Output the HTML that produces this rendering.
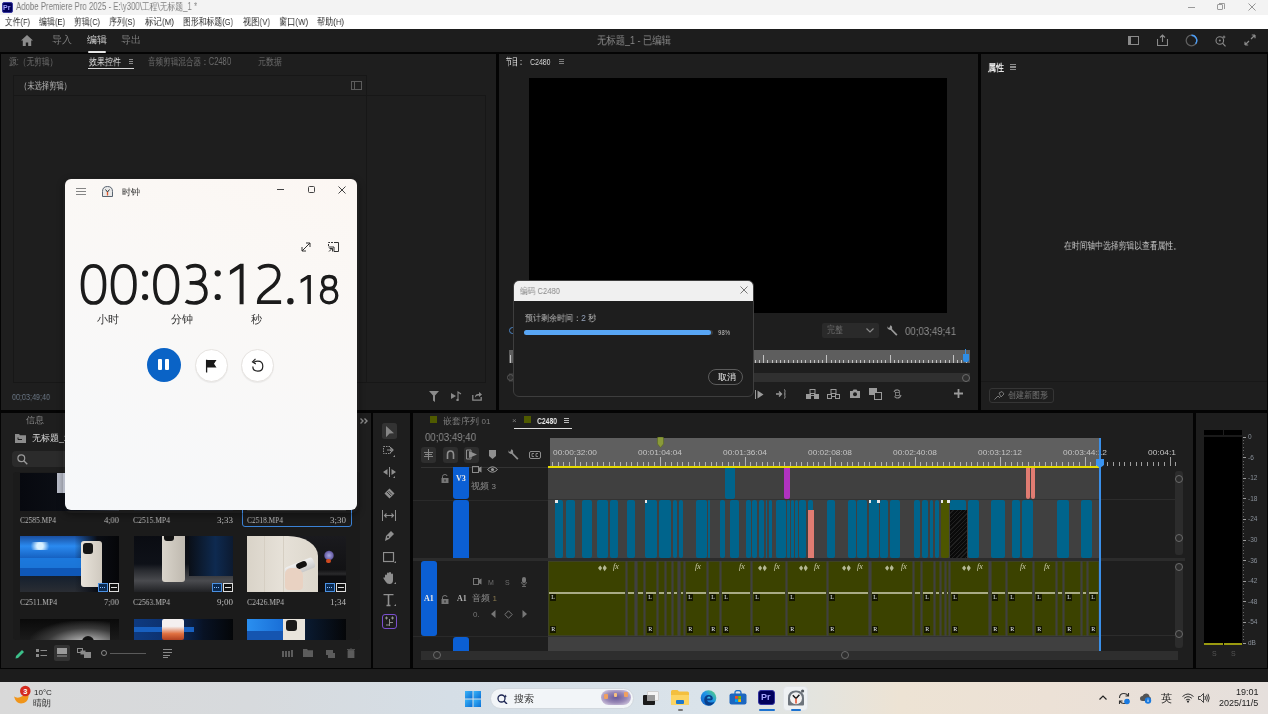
<!DOCTYPE html>
<html><head><meta charset="utf-8">
<style>
*{box-sizing:border-box;margin:0;padding:0}
html,body{width:1268px;height:714px;overflow:hidden;background:#040404;font-family:"Liberation Sans",sans-serif;position:relative}
.a{position:absolute}
.t{position:absolute;white-space:nowrap;line-height:1;will-change:transform}
.fit{transform-origin:0 0}
.pnl{position:absolute;background:#1e1e1e}
</style></head><body>
<!-- title bar -->
<div class="a" style="left:0;top:0;width:1268px;height:15px;background:#f3f3f3"></div>
<div class="a" style="left:1.5px;top:2px;width:11px;height:10.5px;background:#00005b;border-radius:2px;border:1px solid #3a3aa0"></div>
<div class="t" style="left:3px;top:3.8px;font-size:7px;color:#a6a6ff;font-weight:bold">Pr</div>
<div class="t fit" style="left: 16px; top: 2px; font-size: 10px; color: rgb(127, 127, 127); width: 231.781px; transform: scaleX(0.7809);">Adobe Premiere Pro 2025 - E:\y300\工程\无标题_1 *</div>
<div class="a" style="left:1188px;top:7px;width:7px;height:1px;background:#9a9a9a"></div>
<div class="a" style="left:1217px;top:4px;width:6px;height:6px;border:1px solid #9a9a9a;border-radius:1px"></div>
<div class="a" style="left:1219px;top:2.5px;width:6px;height:6px;border-top:1px solid #9a9a9a;border-right:1px solid #9a9a9a;border-radius:0 1.5px 0 0"></div>
<svg class="a" style="left:1247.5px;top:3px" width="8" height="8"><path d="M0.5 0.5L7.5 7.5M7.5 0.5L0.5 7.5" stroke="#8a8a8a" stroke-width="0.9"></path></svg>
<!-- menu -->
<div class="a" style="left:0;top:15px;width:1268px;height:13.5px;background:#fff"></div>
<div class="t fit" style="left: 5px; top: 17px; font-size: 9.5px; color: rgb(42, 42, 42); width: 32.1406px; transform: scaleX(0.7778);">文件(F)</div>
<div class="t fit" style="left: 39px; top: 17px; font-size: 9.5px; color: rgb(42, 42, 42); width: 32.6719px; transform: scaleX(0.7958);">编辑(E)</div>
<div class="t fit" style="left: 74px; top: 17px; font-size: 9.5px; color: rgb(42, 42, 42); width: 33.2031px; transform: scaleX(0.7831);">剪辑(C)</div>
<div class="t fit" style="left: 109px; top: 17px; font-size: 9.5px; color: rgb(42, 42, 42); width: 32.6719px; transform: scaleX(0.7958);">序列(S)</div>
<div class="t fit" style="left: 145px; top: 17px; font-size: 9.5px; color: rgb(42, 42, 42); width: 34.25px; transform: scaleX(0.8467);">标记(M)</div>
<div class="t fit" style="left: 183px; top: 17px; font-size: 9.5px; color: rgb(42, 42, 42); width: 63.7188px; transform: scaleX(0.7847);">图形和标题(G)</div>
<div class="t fit" style="left: 243px; top: 17px; font-size: 9.5px; color: rgb(42, 42, 42); width: 32.6719px; transform: scaleX(0.8264);">视图(V)</div>
<div class="t fit" style="left: 279px; top: 17px; font-size: 9.5px; color: rgb(42, 42, 42); width: 35.2969px; transform: scaleX(0.8216);">窗口(W)</div>
<div class="t fit" style="left: 317px; top: 17px; font-size: 9.5px; color: rgb(42, 42, 42); width: 33.2031px; transform: scaleX(0.8132);">帮助(H)</div>
<!-- header -->
<div class="a" style="left:0;top:28.5px;width:1268px;height:23.5px;background:#1d1d1d"></div>
<svg class="a" style="left:21px;top:35px" width="12" height="11"><path d="M6 0L0 5.5H1.8V11H4.8V7.5H7.2V11H10.2V5.5H12Z" fill="#8c8c8c"></path></svg>
<div class="t" style="left:52px;top:35px;font-size:10px;color:#7c7c7c">导入</div>
<div class="t" style="left:87px;top:35px;font-size:10px;color:#cfcfcf">编辑</div>
<div class="a" style="left:88px;top:51px;width:18px;height:1.5px;background:#e6e6e6;border-radius:1px"></div>
<div class="t" style="left:121px;top:35px;font-size:10px;color:#7c7c7c">导出</div>
<div class="t fit" style="left: 597px; top: 35px; font-size: 10.5px; color: rgb(138, 138, 138); width: 87.0156px; transform: scaleX(0.8504);">无标题_1 - 已编辑</div>
<svg class="a" style="left:1128px;top:36px" width="11" height="9"><rect x="0.5" y="0.5" width="10" height="8" fill="none" stroke="#8a8a8a"></rect><rect x="1" y="1" width="2" height="7" fill="#8a8a8a"></rect></svg>
<svg class="a" style="left:1157px;top:34px" width="11" height="12"><path d="M0.5 5V11.5H10.5V5M5.5 8V1M3 3.5L5.5 1L8 3.5" fill="none" stroke="#8a8a8a" stroke-width="1.1"></path></svg>
<svg class="a" style="left:1185px;top:34px" width="13" height="13"><circle cx="6.5" cy="6.5" r="5.3" fill="none" stroke="#5e5e5e" stroke-width="1.3"></circle><path d="M6.5 1.2A5.3 5.3 0 0 1 10.6 9.8" fill="none" stroke="#4a9cf5" stroke-width="1.4"></path></svg>
<svg class="a" style="left:1215px;top:34px" width="12" height="13"><circle cx="4.8" cy="6.5" r="3.8" fill="none" stroke="#8a8a8a" stroke-width="1.1"></circle><path d="M7.5 9.2L10.5 12.3" stroke="#8a8a8a" stroke-width="1.2"></path><circle cx="4.8" cy="6.5" r="1" fill="#8a8a8a"></circle><path d="M9 1L9.6 2.5L11 3L9.6 3.5L9 5L8.4 3.5L7 3L8.4 2.5Z" fill="#8a8a8a"></path></svg>
<svg class="a" style="left:1244px;top:34px" width="12" height="12"><path d="M7 5L11 1M11 1H7.8M11 1V4.2M5 7L1 11M1 11H4.2M1 11V7.8" fill="none" stroke="#8a8a8a" stroke-width="1.2"></path></svg>
<!-- ===== effect controls panel ===== -->
<div class="pnl" style="left:1px;top:54px;width:495px;height:356px"></div>
<div class="t fit" style="left: 9px; top: 57px; font-size: 10px; color: rgb(114, 114, 114); width: 62.7812px; transform: scaleX(0.7646);">源:（无剪辑）</div>
<div class="t fit" style="left: 89px; top: 57px; font-size: 10px; color: rgb(226, 226, 226); width: 40px; transform: scaleX(0.8);">效果控件</div>
<div class="a" style="left:129px;top:59px;width:4px;height:5px;background:repeating-linear-gradient(#8a8a8a 0 1px,transparent 1px 2px)"></div>
<div class="a" style="left:88px;top:68px;width:46px;height:1px;background:#d8d8d8"></div>
<div class="t fit" style="left: 148px; top: 57px; font-size: 10px; color: rgb(110, 110, 110); width: 109.469px; transform: scaleX(0.7582);">音频剪辑混合器：C2480</div>
<div class="t fit" style="left: 258px; top: 57px; font-size: 10px; color: rgb(110, 110, 110); width: 30px; transform: scaleX(0.8);">元数据</div>
<div class="a" style="left:13px;top:75px;width:354px;height:308px;border:1px solid #171717"></div>
<div class="a" style="left:13px;top:95px;width:354px;height:1px;background:#171717"></div>
<div class="a" style="left:366px;top:95px;width:120px;height:288px;border:1px solid #171717;border-left:none"></div>
<div class="t fit" style="left: 20px; top: 81px; font-size: 9.5px; color: rgb(184, 184, 184); width: 70px; transform: scaleX(0.7286);">（未选择剪辑）</div>
<svg class="a" style="left:351px;top:81px" width="11" height="9"><rect x="0.5" y="0.5" width="10" height="8" fill="none" stroke="#5c5c5c"></rect><path d="M3.5 0.5V8.5" stroke="#5c5c5c"></path></svg>
<div class="t fit" style="left: 12px; top: 393px; font-size: 8.5px; color: rgb(107, 119, 133); width: 44.9062px; transform: scaleX(0.8462);">00;03;49;40</div>
<svg class="a" style="left:429px;top:391px" width="10" height="11"><path d="M0 0H10L6 4.5V11L4 9.5V4.5Z" fill="#8a8a8a"></path></svg>
<svg class="a" style="left:451px;top:391px" width="11" height="10"><path d="M0 2L5 5L0 8Z" fill="#8a8a8a"></path><path d="M7 9.5V1L10 3" fill="none" stroke="#8a8a8a" stroke-width="1.1"></path><circle cx="6.5" cy="9" r="1.2" fill="#8a8a8a"></circle></svg>
<svg class="a" style="left:472px;top:391px" width="10" height="10"><path d="M0.8 4V9.2H9.2V6" fill="none" stroke="#8a8a8a" stroke-width="1.3"></path><path d="M3 6.5Q3 3 6 3H7V1L10 3.5L7 6V4.5H6Q4.5 4.5 3 6.5Z" fill="#8a8a8a"></path></svg>

<!-- ===== program monitor ===== -->
<div class="pnl" style="left:499px;top:54px;width:479px;height:356px"></div>
<div class="t fit" style="left: 506px; top: 57px; font-size: 10px; color: rgb(230, 230, 230); width: 30px; transform: scaleX(0.6);">节目：</div>
<div class="t fit" style="left: 530px; top: 58px; font-size: 9px; color: rgb(220, 220, 220); width: 26.5312px; transform: scaleX(0.7727);">C2480</div>
<div class="a" style="left:559px;top:59px;width:5px;height:5px;background:repeating-linear-gradient(#7d7d7d 0 1px,transparent 1px 2px)"></div>
<div class="a" style="left:529px;top:78px;width:418px;height:235px;background:#000"></div>
<div class="a" style="left:509px;top:327px;width:7px;height:7px;border-radius:50%;border:1.2px solid #4d86c6"></div>
<!-- dropdown -->
<div class="a" style="left:822px;top:323px;width:57px;height:15px;background:#2a2a2a;border-radius:2px"></div>
<div class="t fit" style="left: 827px; top: 325px; font-size: 10px; color: rgb(110, 110, 110); width: 20px; transform: scaleX(0.8);">完整</div>
<svg class="a" style="left:866px;top:328px" width="8" height="5"><path d="M0.5 0.5L4 4L7.5 0.5" fill="none" stroke="#8a8a8a" stroke-width="1.2"></path></svg>
<svg class="a" style="left:887px;top:325px" width="11" height="11"><path d="M10.5 9.5L5 4Q5.8 1 3.3 0.3L2.6 2.4L1 2.8L0.3 1.3Q-0.2 4.8 3.7 5L9.2 10.8Z" fill="#9a9a9a"></path></svg>
<div class="t fit" style="left: 905px; top: 326px; font-size: 10.5px; color: rgb(143, 143, 143); width: 55.4688px; transform: scaleX(0.9194);">00;03;49;41</div>
<!-- scrubber -->
<div class="a" style="left:509px;top:350px;width:461px;height:13px;background:#5e5e5e"></div>
<div class="a" style="left:509.90px;top:355px;width:1px;height:8px;background:#c2c2c2"></div>
<div class="a" style="left:514.12px;top:360px;width:1px;height:3px;background:#c2c2c2"></div>
<div class="a" style="left:518.34px;top:360px;width:1px;height:3px;background:#c2c2c2"></div>
<div class="a" style="left:522.56px;top:360px;width:1px;height:3px;background:#c2c2c2"></div>
<div class="a" style="left:526.78px;top:360px;width:1px;height:3px;background:#c2c2c2"></div>
<div class="a" style="left:531.00px;top:360px;width:1px;height:3px;background:#c2c2c2"></div>
<div class="a" style="left:535.22px;top:360px;width:1px;height:3px;background:#c2c2c2"></div>
<div class="a" style="left:539.44px;top:360px;width:1px;height:3px;background:#c2c2c2"></div>
<div class="a" style="left:543.66px;top:360px;width:1px;height:3px;background:#c2c2c2"></div>
<div class="a" style="left:547.88px;top:360px;width:1px;height:3px;background:#c2c2c2"></div>
<div class="a" style="left:552.10px;top:360px;width:1px;height:3px;background:#c2c2c2"></div>
<div class="a" style="left:556.32px;top:360px;width:1px;height:3px;background:#c2c2c2"></div>
<div class="a" style="left:560.54px;top:360px;width:1px;height:3px;background:#c2c2c2"></div>
<div class="a" style="left:564.76px;top:360px;width:1px;height:3px;background:#c2c2c2"></div>
<div class="a" style="left:568.98px;top:360px;width:1px;height:3px;background:#c2c2c2"></div>
<div class="a" style="left:573.20px;top:355px;width:1px;height:8px;background:#c2c2c2"></div>
<div class="a" style="left:577.42px;top:360px;width:1px;height:3px;background:#c2c2c2"></div>
<div class="a" style="left:581.64px;top:360px;width:1px;height:3px;background:#c2c2c2"></div>
<div class="a" style="left:585.86px;top:360px;width:1px;height:3px;background:#c2c2c2"></div>
<div class="a" style="left:590.08px;top:360px;width:1px;height:3px;background:#c2c2c2"></div>
<div class="a" style="left:594.30px;top:360px;width:1px;height:3px;background:#c2c2c2"></div>
<div class="a" style="left:598.52px;top:360px;width:1px;height:3px;background:#c2c2c2"></div>
<div class="a" style="left:602.74px;top:360px;width:1px;height:3px;background:#c2c2c2"></div>
<div class="a" style="left:606.96px;top:360px;width:1px;height:3px;background:#c2c2c2"></div>
<div class="a" style="left:611.18px;top:360px;width:1px;height:3px;background:#c2c2c2"></div>
<div class="a" style="left:615.40px;top:360px;width:1px;height:3px;background:#c2c2c2"></div>
<div class="a" style="left:619.62px;top:360px;width:1px;height:3px;background:#c2c2c2"></div>
<div class="a" style="left:623.84px;top:360px;width:1px;height:3px;background:#c2c2c2"></div>
<div class="a" style="left:628.06px;top:360px;width:1px;height:3px;background:#c2c2c2"></div>
<div class="a" style="left:632.28px;top:360px;width:1px;height:3px;background:#c2c2c2"></div>
<div class="a" style="left:636.50px;top:355px;width:1px;height:8px;background:#c2c2c2"></div>
<div class="a" style="left:640.72px;top:360px;width:1px;height:3px;background:#c2c2c2"></div>
<div class="a" style="left:644.94px;top:360px;width:1px;height:3px;background:#c2c2c2"></div>
<div class="a" style="left:649.16px;top:360px;width:1px;height:3px;background:#c2c2c2"></div>
<div class="a" style="left:653.38px;top:360px;width:1px;height:3px;background:#c2c2c2"></div>
<div class="a" style="left:657.60px;top:360px;width:1px;height:3px;background:#c2c2c2"></div>
<div class="a" style="left:661.82px;top:360px;width:1px;height:3px;background:#c2c2c2"></div>
<div class="a" style="left:666.04px;top:360px;width:1px;height:3px;background:#c2c2c2"></div>
<div class="a" style="left:670.26px;top:360px;width:1px;height:3px;background:#c2c2c2"></div>
<div class="a" style="left:674.48px;top:360px;width:1px;height:3px;background:#c2c2c2"></div>
<div class="a" style="left:678.70px;top:360px;width:1px;height:3px;background:#c2c2c2"></div>
<div class="a" style="left:682.92px;top:360px;width:1px;height:3px;background:#c2c2c2"></div>
<div class="a" style="left:687.14px;top:360px;width:1px;height:3px;background:#c2c2c2"></div>
<div class="a" style="left:691.36px;top:360px;width:1px;height:3px;background:#c2c2c2"></div>
<div class="a" style="left:695.58px;top:360px;width:1px;height:3px;background:#c2c2c2"></div>
<div class="a" style="left:699.80px;top:355px;width:1px;height:8px;background:#c2c2c2"></div>
<div class="a" style="left:704.02px;top:360px;width:1px;height:3px;background:#c2c2c2"></div>
<div class="a" style="left:708.24px;top:360px;width:1px;height:3px;background:#c2c2c2"></div>
<div class="a" style="left:712.46px;top:360px;width:1px;height:3px;background:#c2c2c2"></div>
<div class="a" style="left:716.68px;top:360px;width:1px;height:3px;background:#c2c2c2"></div>
<div class="a" style="left:720.90px;top:360px;width:1px;height:3px;background:#c2c2c2"></div>
<div class="a" style="left:725.12px;top:360px;width:1px;height:3px;background:#c2c2c2"></div>
<div class="a" style="left:729.34px;top:360px;width:1px;height:3px;background:#c2c2c2"></div>
<div class="a" style="left:733.56px;top:360px;width:1px;height:3px;background:#c2c2c2"></div>
<div class="a" style="left:737.78px;top:360px;width:1px;height:3px;background:#c2c2c2"></div>
<div class="a" style="left:742.00px;top:360px;width:1px;height:3px;background:#c2c2c2"></div>
<div class="a" style="left:746.22px;top:360px;width:1px;height:3px;background:#c2c2c2"></div>
<div class="a" style="left:750.44px;top:360px;width:1px;height:3px;background:#c2c2c2"></div>
<div class="a" style="left:754.66px;top:360px;width:1px;height:3px;background:#c2c2c2"></div>
<div class="a" style="left:758.88px;top:360px;width:1px;height:3px;background:#c2c2c2"></div>
<div class="a" style="left:763.10px;top:355px;width:1px;height:8px;background:#c2c2c2"></div>
<div class="a" style="left:767.32px;top:360px;width:1px;height:3px;background:#c2c2c2"></div>
<div class="a" style="left:771.54px;top:360px;width:1px;height:3px;background:#c2c2c2"></div>
<div class="a" style="left:775.76px;top:360px;width:1px;height:3px;background:#c2c2c2"></div>
<div class="a" style="left:779.98px;top:360px;width:1px;height:3px;background:#c2c2c2"></div>
<div class="a" style="left:784.20px;top:360px;width:1px;height:3px;background:#c2c2c2"></div>
<div class="a" style="left:788.42px;top:360px;width:1px;height:3px;background:#c2c2c2"></div>
<div class="a" style="left:792.64px;top:360px;width:1px;height:3px;background:#c2c2c2"></div>
<div class="a" style="left:796.86px;top:360px;width:1px;height:3px;background:#c2c2c2"></div>
<div class="a" style="left:801.08px;top:360px;width:1px;height:3px;background:#c2c2c2"></div>
<div class="a" style="left:805.30px;top:360px;width:1px;height:3px;background:#c2c2c2"></div>
<div class="a" style="left:809.52px;top:360px;width:1px;height:3px;background:#c2c2c2"></div>
<div class="a" style="left:813.74px;top:360px;width:1px;height:3px;background:#c2c2c2"></div>
<div class="a" style="left:817.96px;top:360px;width:1px;height:3px;background:#c2c2c2"></div>
<div class="a" style="left:822.18px;top:360px;width:1px;height:3px;background:#c2c2c2"></div>
<div class="a" style="left:826.40px;top:355px;width:1px;height:8px;background:#c2c2c2"></div>
<div class="a" style="left:830.62px;top:360px;width:1px;height:3px;background:#c2c2c2"></div>
<div class="a" style="left:834.84px;top:360px;width:1px;height:3px;background:#c2c2c2"></div>
<div class="a" style="left:839.06px;top:360px;width:1px;height:3px;background:#c2c2c2"></div>
<div class="a" style="left:843.28px;top:360px;width:1px;height:3px;background:#c2c2c2"></div>
<div class="a" style="left:847.50px;top:360px;width:1px;height:3px;background:#c2c2c2"></div>
<div class="a" style="left:851.72px;top:360px;width:1px;height:3px;background:#c2c2c2"></div>
<div class="a" style="left:855.94px;top:360px;width:1px;height:3px;background:#c2c2c2"></div>
<div class="a" style="left:860.16px;top:360px;width:1px;height:3px;background:#c2c2c2"></div>
<div class="a" style="left:864.38px;top:360px;width:1px;height:3px;background:#c2c2c2"></div>
<div class="a" style="left:868.60px;top:360px;width:1px;height:3px;background:#c2c2c2"></div>
<div class="a" style="left:872.82px;top:360px;width:1px;height:3px;background:#c2c2c2"></div>
<div class="a" style="left:877.04px;top:360px;width:1px;height:3px;background:#c2c2c2"></div>
<div class="a" style="left:881.26px;top:360px;width:1px;height:3px;background:#c2c2c2"></div>
<div class="a" style="left:885.48px;top:360px;width:1px;height:3px;background:#c2c2c2"></div>
<div class="a" style="left:889.70px;top:355px;width:1px;height:8px;background:#c2c2c2"></div>
<div class="a" style="left:893.92px;top:360px;width:1px;height:3px;background:#c2c2c2"></div>
<div class="a" style="left:898.14px;top:360px;width:1px;height:3px;background:#c2c2c2"></div>
<div class="a" style="left:902.36px;top:360px;width:1px;height:3px;background:#c2c2c2"></div>
<div class="a" style="left:906.58px;top:360px;width:1px;height:3px;background:#c2c2c2"></div>
<div class="a" style="left:910.80px;top:360px;width:1px;height:3px;background:#c2c2c2"></div>
<div class="a" style="left:915.02px;top:360px;width:1px;height:3px;background:#c2c2c2"></div>
<div class="a" style="left:919.24px;top:360px;width:1px;height:3px;background:#c2c2c2"></div>
<div class="a" style="left:923.46px;top:360px;width:1px;height:3px;background:#c2c2c2"></div>
<div class="a" style="left:927.68px;top:360px;width:1px;height:3px;background:#c2c2c2"></div>
<div class="a" style="left:931.90px;top:360px;width:1px;height:3px;background:#c2c2c2"></div>
<div class="a" style="left:936.12px;top:360px;width:1px;height:3px;background:#c2c2c2"></div>
<div class="a" style="left:940.34px;top:360px;width:1px;height:3px;background:#c2c2c2"></div>
<div class="a" style="left:944.56px;top:360px;width:1px;height:3px;background:#c2c2c2"></div>
<div class="a" style="left:948.78px;top:360px;width:1px;height:3px;background:#c2c2c2"></div>
<div class="a" style="left:953.00px;top:355px;width:1px;height:8px;background:#c2c2c2"></div>
<div class="a" style="left:957.22px;top:360px;width:1px;height:3px;background:#c2c2c2"></div>
<div class="a" style="left:961.44px;top:360px;width:1px;height:3px;background:#c2c2c2"></div>
<div class="a" style="left:965.66px;top:360px;width:1px;height:3px;background:#c2c2c2"></div>
<div class="a" style="left:963px;top:354px;width:6px;height:8px;background:#2f8de4;border-radius:0 0 2px 2px"></div>
<div class="a" style="left:965px;top:349px;width:1px;height:6px;background:#2f8de4"></div>
<div class="a" style="left:509px;top:373px;width:461px;height:9px;background:#303030"></div>
<div class="a" style="left:507px;top:374px;width:7px;height:7px;border-radius:50%;border:1.2px solid #5a5a5a"></div>
<div class="a" style="left:962px;top:374px;width:8px;height:8px;border-radius:50%;border:1.2px solid #6b6b6b"></div>
<!-- transport buttons -->
<svg class="a" style="left:755px;top:390px" width="9" height="9"><path d="M0.5 0V9" stroke="#9a9a9a"></path><path d="M2.5 0.5L8.5 4.5L2.5 8.5Z" fill="#9a9a9a"></path></svg>
<svg class="a" style="left:776px;top:389px" width="10" height="10"><path d="M0 5H5M3 2.5L5.5 5L3 7.5" fill="none" stroke="#9a9a9a" stroke-width="1.3"></path><path d="M8 0.5Q9.5 0.5 9 3L8.5 4.5L9.5 5L8.5 5.5L9 7Q9.5 9.5 8 9.5" fill="none" stroke="#9a9a9a" stroke-width="0.9"></path></svg>
<svg class="a" style="left:806px;top:389px" width="13" height="10"><rect x="4" y="0.5" width="5" height="4" fill="none" stroke="#9a9a9a"></rect><rect x="0" y="5" width="5" height="5" fill="#9a9a9a"></rect><rect x="8" y="5" width="5" height="5" fill="#9a9a9a"></rect><path d="M5 6.5H8" stroke="#9a9a9a"></path></svg>
<svg class="a" style="left:827px;top:389px" width="13" height="10"><rect x="4" y="0.5" width="5" height="4" fill="none" stroke="#9a9a9a"></rect><rect x="0.5" y="5.5" width="4" height="4" fill="none" stroke="#9a9a9a"></rect><rect x="8.5" y="5.5" width="4" height="4" fill="none" stroke="#9a9a9a"></rect><path d="M4.5 7.5H8.5" stroke="#9a9a9a"></path></svg>
<svg class="a" style="left:850px;top:389px" width="10" height="9"><path d="M0 2H2.5L3.5 0.5H6.5L7.5 2H10V9H0Z" fill="#9a9a9a"></path><circle cx="5" cy="5.3" r="2" fill="#1e1e1e"></circle></svg>
<svg class="a" style="left:869px;top:388px" width="13" height="12"><rect x="0" y="0" width="8" height="7" fill="#9a9a9a"></rect><rect x="5.5" y="4.5" width="7" height="7" fill="#1e1e1e" stroke="#9a9a9a"></rect></svg>
<svg class="a" style="left:893px;top:389px" width="9" height="10"><path d="M1 3Q2 0.5 5 1L7 2.5M8 6Q7 9.5 3.5 9L1.5 7.5" fill="none" stroke="#8a8a8a" stroke-width="1.1"></path><rect x="2.5" y="3.5" width="4" height="3" fill="none" stroke="#8a8a8a" stroke-width="0.8"></rect></svg>
<svg class="a" style="left:954px;top:389px" width="9" height="9"><path d="M4.5 0V9M0 4.5H9" stroke="#9a9a9a" stroke-width="1.8"></path></svg>

<!-- ===== properties ===== -->
<div class="pnl" style="left:981px;top:54px;width:286px;height:356px"></div>
<div class="t fit" style="left: 988px; top: 63px; font-size: 10px; color: rgb(232, 232, 232); font-weight: bold; width: 20px; transform: scaleX(0.8);">属性</div>
<div class="a" style="left:1010px;top:64px;width:6px;height:6px;background:repeating-linear-gradient(#8a8a8a 0 1px,transparent 1px 2.5px)"></div>
<div class="t fit" style="left: 1064px; top: 241px; font-size: 9.5px; color: rgb(198, 198, 198); width: 150px; transform: scaleX(0.78);">在时间轴中选择剪辑以查看属性。</div>
<div class="a" style="left:981px;top:381px;width:286px;height:1px;background:#181818"></div>
<div class="a" style="left:989px;top:388px;width:65px;height:15px;border:1px solid #353535;border-radius:3px"></div>
<svg class="a" style="left:994px;top:391px" width="11" height="9"><path d="M0.5 8.5L4 5L6 7M5 2L8 0.5L10 3L7 6Z" fill="none" stroke="#777" stroke-width="1"></path></svg>
<div class="t fit" style="left: 1008px; top: 391px; font-size: 9px; color: rgb(122, 122, 122); width: 45px; transform: scaleX(0.8889);">创建新图形</div>
<div class="pnl" style="left:1px;top:413px;width:370px;height:254.6px"></div>
<div class="t" style="left:26px;top:416px;font-size:8.5px;color:#8a8a8a">信息</div>
<svg class="a" style="left:15px;top:434px" width="11" height="9"><path d="M0 0H4L5 1.2H11V9H0Z" fill="#8c8c8c"></path><path d="M3 5.5H7M3 3.5V5.5" stroke="#1e1e1e" stroke-width="1"></path></svg>
<div class="t" style="left:32px;top:434px;font-size:8.5px;color:#dedede">无标题_1.prproj</div>
<div class="a" style="left:12px;top:451px;width:345px;height:16px;background:#2b2b2b;border-radius:4px"></div>
<svg class="a" style="left:17px;top:454px" width="11" height="11"><circle cx="4.3" cy="4.3" r="3.4" fill="none" stroke="#9a9a9a" stroke-width="1.2"></circle><path d="M6.8 6.8L10.3 10.3" stroke="#9a9a9a" stroke-width="1.3"></path></svg>
<div class="a" style="left:13px;top:472px;width:347px;height:168px;background:#1b1b1b;border-radius:3px"></div>
<div class="a" style="left:20px;top:473px;width:99px;height:38px;background:linear-gradient(90deg,#07090f 0%,#0d1017 60%,#2b2f38 100%)"></div>
<div class="a" style="left:57px;top:473px;width:8px;height:20px;background:#b8bcc8"></div>
<div class="a" style="left:134px;top:473px;width:99px;height:38px;background:#1d2026"></div>
<div class="a" style="left:247px;top:473px;width:99px;height:38px;background:#333"></div>
<div class="a" style="left:242px;top:468px;width:110px;height:59px;border:1.5px solid #3b82d6;border-radius:3px"></div>
<div class="t fit" style="left: 20px; top: 516px; font-size: 9px; color: rgb(186, 186, 186); font-family: &quot;Liberation Serif&quot;, serif; width: 43.7656px; transform: scaleX(0.8226);">C2585.MP4</div>
<div class="t fit" style="left: 104px; top: 516px; font-size: 9px; color: rgb(186, 186, 186); font-family: &quot;Liberation Serif&quot;, serif; width: 16.0156px; transform: scaleX(0.9366);">4;00</div>
<div class="t fit" style="left: 133px; top: 516px; font-size: 9px; color: rgb(186, 186, 186); font-family: &quot;Liberation Serif&quot;, serif; width: 43.7656px; transform: scaleX(0.8454);">C2515.MP4</div>
<div class="t fit" style="left: 217px; top: 516px; font-size: 9px; color: rgb(186, 186, 186); font-family: &quot;Liberation Serif&quot;, serif; width: 16.0156px; transform: scaleX(0.999);">3;33</div>
<div class="t fit" style="left: 247px; top: 516px; font-size: 9px; color: rgb(186, 186, 186); font-family: &quot;Liberation Serif&quot;, serif; width: 43.7656px; transform: scaleX(0.8226);">C2518.MP4</div>
<div class="t fit" style="left: 330px; top: 516px; font-size: 9px; color: rgb(186, 186, 186); font-family: &quot;Liberation Serif&quot;, serif; width: 16.0156px; transform: scaleX(0.999);">3;30</div>
<div class="t fit" style="left: 20px; top: 598px; font-size: 9px; color: rgb(186, 186, 186); font-family: &quot;Liberation Serif&quot;, serif; width: 43.4375px; transform: scaleX(0.8518);">C2511.MP4</div>
<div class="t fit" style="left: 104px; top: 598px; font-size: 9px; color: rgb(186, 186, 186); font-family: &quot;Liberation Serif&quot;, serif; width: 16.0156px; transform: scaleX(0.9366);">7;00</div>
<div class="t fit" style="left: 133px; top: 598px; font-size: 9px; color: rgb(186, 186, 186); font-family: &quot;Liberation Serif&quot;, serif; width: 43.7656px; transform: scaleX(0.8454);">C2563.MP4</div>
<div class="t fit" style="left: 217px; top: 598px; font-size: 9px; color: rgb(186, 186, 186); font-family: &quot;Liberation Serif&quot;, serif; width: 16.0156px; transform: scaleX(0.999);">9;00</div>
<div class="t fit" style="left: 247px; top: 598px; font-size: 9px; color: rgb(186, 186, 186); font-family: &quot;Liberation Serif&quot;, serif; width: 43.7656px; transform: scaleX(0.8454);">C2426.MP4</div>
<div class="t fit" style="left: 330px; top: 598px; font-size: 9px; color: rgb(186, 186, 186); font-family: &quot;Liberation Serif&quot;, serif; width: 16.0156px; transform: scaleX(0.999);">1;34</div>
<div class="a" style="left:20px;top:536px;width:99px;height:56px;overflow:hidden;background:linear-gradient(180deg,#1a4fa0 0%,#2a8af0 18%,#1560c0 40%,#0d3d80 60%,#15202e 72%,#2a2d33 100%)">
<div class="a" style="left:0;top:0;width:99px;height:56px;background:linear-gradient(90deg,transparent 55%,#0a0d14 78%,#050608 100%)"></div>
<div class="a" style="left:5px;top:6px;width:30px;height:8px;background:radial-gradient(circle,#d8f0ff 0 20%,transparent 60%)"></div>
<div class="a" style="left:0;top:22px;width:75px;height:10px;background:#1d7be0;opacity:.9"></div>
<div class="a" style="left:0;top:32px;width:72px;height:8px;background:#0f58b8"></div>
<div class="a" style="left:61px;top:5px;width:21px;height:46px;background:linear-gradient(90deg,#e8e3da,#cfc9bf);border-radius:3px"></div>
<div class="a" style="left:63px;top:7px;width:10px;height:11px;background:#151515;border-radius:3px"></div>
</div>
<div class="a" style="left:134px;top:536px;width:99px;height:56px;overflow:hidden;background:linear-gradient(180deg,#0a0c12 0%,#0e1118 50%,#2a2c31 62%,#4a4b4f 80%,#202124 100%)">
<div class="a" style="left:55px;top:0;width:44px;height:40px;background:linear-gradient(90deg,#0a0f18,#0e2a50 60%,#0c1a30)"></div>
<div class="a" style="left:28px;top:0;width:23px;height:46px;background:linear-gradient(90deg,#d9d4cb,#bfb9af);border-radius:0 0 3px 3px"></div>
<div class="a" style="left:30px;top:0;width:10px;height:5px;background:#111;border-radius:0 0 3px 3px"></div>
</div>
<div class="a" style="left:247px;top:536px;width:99px;height:56px;overflow:hidden;background:linear-gradient(180deg,#1a1a1e,#121214 60%,#2a2a2c 68%,#0e0e10 72%)">
<div class="a" style="left:0;top:0;width:71px;height:56px;background:linear-gradient(90deg,#d9d3c8,#e6e1d8 50%,#ddd7cc);border-radius:0 30px 0 0/0 20px 0 0"></div>
<div class="a" style="left:17px;top:0;width:1px;height:56px;background:#d6cfc3"></div>
<div class="a" style="left:36px;top:0;width:1px;height:56px;background:#d6cfc3"></div>
<div class="a" style="left:77px;top:14px;width:10px;height:11px;background:radial-gradient(circle,#a8a8e0 0,#6a60a8 55%,transparent 70%)"></div>
<div class="a" style="left:79px;top:23px;width:5px;height:4px;background:#d04a20;border-radius:2px"></div>
<div class="a" style="left:38px;top:26px;width:30px;height:11px;background:linear-gradient(#f0f0f0,#c8c8c8);transform:rotate(-22deg);border-radius:3px"></div>
<div class="a" style="left:49px;top:26px;width:11px;height:6px;background:#111;transform:rotate(-22deg);border-radius:3px"></div>
<div class="a" style="left:38px;top:32px;width:18px;height:22px;background:#e9d2c2;border-radius:6px 8px 4px 4px"></div>
</div>
<div class="a" style="left:98px;top:583px;width:10px;height:9px;border:1px solid #4a90e2;background:#0b2a50"></div>
<div class="a" style="left:109px;top:583px;width:10px;height:9px;border:1px solid #ddd;background:#111"></div>
<div class="a" style="left:100px;top:587px;width:6px;height:1px;background:repeating-linear-gradient(90deg,#8cc0ff 0 1px,transparent 1px 2px)"></div>
<div class="a" style="left:111px;top:587px;width:6px;height:1px;background:#ddd"></div>
<div class="a" style="left:212px;top:583px;width:10px;height:9px;border:1px solid #4a90e2;background:#0b2a50"></div>
<div class="a" style="left:223px;top:583px;width:10px;height:9px;border:1px solid #ddd;background:#111"></div>
<div class="a" style="left:214px;top:587px;width:6px;height:1px;background:repeating-linear-gradient(90deg,#8cc0ff 0 1px,transparent 1px 2px)"></div>
<div class="a" style="left:225px;top:587px;width:6px;height:1px;background:#ddd"></div>
<div class="a" style="left:325px;top:583px;width:10px;height:9px;border:1px solid #4a90e2;background:#0b2a50"></div>
<div class="a" style="left:336px;top:583px;width:10px;height:9px;border:1px solid #ddd;background:#111"></div>
<div class="a" style="left:327px;top:587px;width:6px;height:1px;background:repeating-linear-gradient(90deg,#8cc0ff 0 1px,transparent 1px 2px)"></div>
<div class="a" style="left:338px;top:587px;width:6px;height:1px;background:#ddd"></div>
<div class="a" style="left:20px;top:619px;width:99px;height:21px;overflow:hidden;background:linear-gradient(180deg,#0a0a0a,#1a1a1a)"><div class="a" style="left:10px;top:2px;width:80px;height:30px;background:radial-gradient(ellipse at 70% 80%,#f0f0f0 0%,#9a9a9a 20%,#3a3a3a 50%,transparent 75%)"></div><div class="a" style="left:62px;top:17px;width:12px;height:6px;background:#111;border-radius:6px 6px 0 0"></div></div>
<div class="a" style="left:134px;top:619px;width:99px;height:21px;overflow:hidden;background:linear-gradient(90deg,#0e3a80,#0d2f6a 40%,#081224 70%,#040608)"><div class="a" style="left:0;top:8px;width:60px;height:5px;background:#1860c0"></div><div class="a" style="left:28px;top:0;width:22px;height:21px;background:linear-gradient(#f4f0f0 0 35%,#e07040 70%,#b04020);border-radius:2px"></div></div>
<div class="a" style="left:247px;top:619px;width:99px;height:21px;overflow:hidden;background:linear-gradient(90deg,#2a8ff0,#1a70d8 35%,#0a1a30 60%,#050608)"><div class="a" style="left:0;top:12px;width:40px;height:9px;background:#1555b0"></div><div class="a" style="left:36px;top:0;width:22px;height:21px;background:#e8e4dc"></div><div class="a" style="left:39px;top:1px;width:11px;height:11px;background:#1a1a1a;border-radius:3px"></div></div>
<svg class="a" style="left:15px;top:649px" width="10" height="10"><path d="M1 7L7 1L9 3L3 9L0.5 9.5Z" fill="#3cc08a"></path></svg>
<svg class="a" style="left:36px;top:649px" width="11" height="9"><rect x="0" y="0" width="3" height="3" fill="#8a8a8a"></rect><rect x="0" y="5" width="3" height="3" fill="#8a8a8a"></rect><path d="M4.5 1.5H11M4.5 6.5H11" stroke="#8a8a8a"></path></svg>
<div class="a" style="left:54px;top:645px;width:16px;height:16px;background:#333;border-radius:2px"></div>
<svg class="a" style="left:57px;top:648px" width="10" height="9"><rect x="0" y="0" width="10" height="6" fill="#9a9a9a"></rect><path d="M0 8H10" stroke="#9a9a9a"></path></svg>
<svg class="a" style="left:77px;top:648px" width="14" height="10"><rect x="0.5" y="0.5" width="5" height="4" fill="none" stroke="#8a8a8a"></rect><rect x="3.5" y="2.5" width="5" height="4" fill="#8a8a8a"></rect><rect x="7" y="4" width="7" height="6" fill="#8a8a8a"></rect></svg>
<div class="a" style="left:101px;top:650px;width:6px;height:6px;border-radius:50%;border:1px solid #8a8a8a"></div>
<div class="a" style="left:110px;top:653px;width:36px;height:1px;background:#5a5a5a"></div>
<svg class="a" style="left:163px;top:649px" width="9" height="9"><path d="M0 0.5H9M0 3.5H9M0 6.5H7M0 8.5H5" stroke="#8a8a8a"></path></svg>
<svg class="a" style="left:282px;top:650px" width="11" height="7"><rect x="0" y="1" width="2" height="6" fill="#5c5c5c"></rect><rect x="3" y="1" width="2" height="6" fill="#5c5c5c"></rect><rect x="6" y="1" width="2" height="6" fill="#5c5c5c"></rect><rect x="9" y="0" width="2" height="7" fill="#5c5c5c"></rect></svg>
<svg class="a" style="left:303px;top:649px" width="10" height="8"><path d="M0 0H4L5 1.2H10V8H0Z" fill="#5c5c5c"></path></svg>
<svg class="a" style="left:326px;top:649px" width="9" height="9"><path d="M0 1H7V4H9V9H2V6H0Z" fill="#5c5c5c"></path></svg>
<svg class="a" style="left:347px;top:648px" width="8" height="10"><path d="M0 1.5H8M3 0H5M1 2.5H7V10H1Z" fill="#5c5c5c" stroke="#5c5c5c" stroke-width="0.8"></path></svg>
<svg class="a" style="left:360px;top:417.5px" width="8" height="6"><path d="M0.5 0.5L3 3L0.5 5.5M4.5 0.5L7 3L4.5 5.5" fill="none" stroke="#8a8a8a" stroke-width="1.4"></path></svg>
<div class="pnl" style="left:373px;top:413px;width:37px;height:254.6px"></div>
<div class="a" style="left:381.5px;top:423px;width:15.5px;height:16px;background:#333;border-radius:2.5px"></div>
<svg class="a" style="left:386px;top:426px" width="9" height="12"><path d="M0 0L8 7.3L3.6 7.6L0 11.2Z" fill="#858585"></path></svg>
<svg class="a" style="left:383px;top:446px" width="13" height="11"><rect x="0.5" y="0.5" width="7" height="7" fill="none" stroke="#8f8f8f" stroke-dasharray="1.5 1"></rect><path d="M4 4H10M8 2L10 4L8 6" fill="none" stroke="#8f8f8f" stroke-width="1.2"></path><path d="M12 9V11H10Z" fill="#8f8f8f"></path></svg>
<svg class="a" style="left:383px;top:467px" width="13" height="11"><path d="M6.5 0V10" stroke="#8f8f8f"></path><path d="M0 5L4.5 2V8Z M13 5L8.5 2V8Z" fill="#8f8f8f"></path><path d="M12 9V11H10Z" fill="#8f8f8f"></path></svg>
<svg class="a" style="left:384px;top:488px" width="11" height="11"><path d="M0.5 5.5L5.5 0.5L10.5 5.5L5.5 10.5Z" fill="#8f8f8f"></path><path d="M3 4L7 8M4.5 3L8 6.5" stroke="#1e1e1e" stroke-width="0.8"></path></svg>
<svg class="a" style="left:382px;top:510px" width="14" height="11"><path d="M0.5 0V11M13.5 0V11" stroke="#8f8f8f"></path><path d="M2.5 5.5H11.5M4.5 3.5L2.5 5.5L4.5 7.5M9.5 3.5L11.5 5.5L9.5 7.5" fill="none" stroke="#8f8f8f" stroke-width="1.1"></path></svg>
<svg class="a" style="left:384px;top:530px" width="11" height="12"><path d="M1 11L2 6L7 1L10 4L5 9Z" fill="#8f8f8f"></path><circle cx="4" cy="7" r="1" fill="#1e1e1e"></circle></svg>
<svg class="a" style="left:383px;top:552px" width="13" height="11"><rect x="0.5" y="0.5" width="10" height="9" fill="none" stroke="#8f8f8f" stroke-width="1.2"></rect><path d="M13 9V11H11Z" fill="#8f8f8f"></path></svg>
<svg class="a" style="left:383px;top:572px" width="13" height="13"><path d="M2 6V3.5Q2 2.5 3 2.5Q4 2.5 4 3.5V1.5Q4 0.5 5 0.5Q6 0.5 6 1.5V1Q6 0 7 0Q8 0 8 1V2.5Q8 1.5 9 1.5Q10 1.5 10 2.5V8Q10 12 6.5 12Q4 12 2.5 9.5L0.5 6.5Q0 5.5 1 5.3Q1.8 5.2 2 6Z" fill="#8f8f8f"></path><path d="M13 10V12H11Z" fill="#8f8f8f"></path></svg>
<svg class="a" style="left:383px;top:594px" width="13" height="13"><path d="M0.5 0.5H10.5M5.5 0.5V11.5M3.5 11.5H7.5" fill="none" stroke="#8f8f8f" stroke-width="1.6"></path><path d="M13 10V12H11Z" fill="#8f8f8f"></path></svg>
<div class="a" style="left:382px;top:614px;width:15px;height:15px;border:1px solid #7b4fd0;border-radius:3px"></div>
<svg class="a" style="left:384px;top:616px" width="11" height="11"><path d="M1 2H4M2.5 0.5V3.5M7 2H10M8.5 0.5V3.5M5.5 3V10M5.5 6.5H9M2 9H5" stroke="#9a9a9a" stroke-width="0.9"></path></svg>
<div class="pnl" style="left:413px;top:413px;width:780px;height:254.6px"></div>
<div class="a" style="left:430px;top:416px;width:7px;height:7px;background:#4f5a00"></div>
<div class="t" style="left:443px;top:416.5px;font-size:8.8px;color:#7e7e7e">嵌套序列 <span style="font-size:8px">01</span></div>
<div class="t" style="left:512px;top:417px;font-size:8px;color:#7e7e7e">×</div>
<div class="a" style="left:524px;top:416px;width:7px;height:7px;background:#4f5a00"></div>
<div class="t fit" style="left: 537px; top: 417px; font-size: 9px; color: rgb(232, 232, 232); font-weight: bold; font-family: &quot;Liberation Sans&quot;, sans-serif; width: 26.5312px; transform: scaleX(0.7538);">C2480</div>
<div class="a" style="left:564px;top:418px;width:5px;height:5px;background:repeating-linear-gradient(#bcbcbc 0 1px,transparent 1px 2px)"></div>
<div class="a" style="left:514px;top:428px;width:58px;height:1px;background:#dcdcdc"></div>
<div class="t fit" style="left: 425px; top: 432px; font-size: 10.5px; color: rgb(140, 140, 140); width: 55.4688px; transform: scaleX(0.9194);">00;03;49;40</div>
<div class="a" style="left:421px;top:447px;width:15px;height:16px;background:#2e2e2e;border-radius:3px"></div>
<div class="a" style="left:443px;top:447px;width:15px;height:16px;background:#2e2e2e;border-radius:3px"></div>
<div class="a" style="left:464px;top:447px;width:15px;height:16px;background:#2e2e2e;border-radius:3px"></div>
<svg class="a" style="left:423px;top:449px" width="11" height="11"><path d="M5.5 0V11M1 3.5H10M2 5.5H9M1 7.5H10" stroke="#8f8f8f" stroke-width="0.9"></path></svg>
<svg class="a" style="left:446px;top:450px" width="9" height="9"><path d="M1.5 9V4.5Q1.5 1 4.5 1Q7.5 1 7.5 4.5V9" fill="none" stroke="#8f8f8f" stroke-width="1.6"></path></svg>
<svg class="a" style="left:466px;top:449px" width="11" height="11"><path d="M0.5 1H5V10H0.5Z" fill="none" stroke="#8f8f8f"></path><path d="M3 2L11 5.5L3 9Z" fill="#8f8f8f"></path></svg>
<svg class="a" style="left:489px;top:450px" width="7" height="9"><path d="M0 0H7V6L3.5 9L0 6Z" fill="#8f8f8f"></path></svg>
<svg class="a" style="left:508px;top:449px" width="11" height="11"><path d="M10.5 9.5L5 4Q5.8 1 3.3 0.3L2.6 2.4L1 2.8L0.3 1.3Q-0.2 4.8 3.7 5L9.2 10.8Z" fill="#8f8f8f"></path></svg>
<svg class="a" style="left:529px;top:451px" width="12" height="8"><rect x="0.5" y="0.5" width="11" height="7" rx="1.5" fill="none" stroke="#8f8f8f"></rect><path d="M5 2.5H3V5.5H5M9 2.5H7V5.5H9" fill="none" stroke="#8f8f8f" stroke-width="0.9"></path></svg>
<div class="a" style="left:421px;top:467px;width:127px;height:1px;background:#333"></div>
<div class="a" style="left:550px;top:438px;width:550px;height:29px;background:#5f5f5f"></div>
<div class="a" style="left:1100px;top:438px;width:80px;height:29px;background:#1e1e1e"></div>
<div class="a" style="left:551.83px;top:462px;width:1px;height:4px;background:#b4b4b4"></div>
<div class="a" style="left:557.50px;top:462px;width:1px;height:4px;background:#b4b4b4"></div>
<div class="a" style="left:563.17px;top:462px;width:1px;height:4px;background:#b4b4b4"></div>
<div class="a" style="left:568.83px;top:462px;width:1px;height:4px;background:#b4b4b4"></div>
<div class="a" style="left:574.50px;top:457px;width:1px;height:9px;background:#b4b4b4"></div>
<div class="a" style="left:580.17px;top:462px;width:1px;height:4px;background:#b4b4b4"></div>
<div class="a" style="left:585.83px;top:462px;width:1px;height:4px;background:#b4b4b4"></div>
<div class="a" style="left:591.50px;top:462px;width:1px;height:4px;background:#b4b4b4"></div>
<div class="a" style="left:597.17px;top:462px;width:1px;height:4px;background:#b4b4b4"></div>
<div class="a" style="left:602.83px;top:462px;width:1px;height:4px;background:#b4b4b4"></div>
<div class="a" style="left:608.50px;top:462px;width:1px;height:4px;background:#b4b4b4"></div>
<div class="a" style="left:614.17px;top:462px;width:1px;height:4px;background:#b4b4b4"></div>
<div class="a" style="left:619.83px;top:462px;width:1px;height:4px;background:#b4b4b4"></div>
<div class="a" style="left:625.50px;top:462px;width:1px;height:4px;background:#b4b4b4"></div>
<div class="a" style="left:631.17px;top:462px;width:1px;height:4px;background:#b4b4b4"></div>
<div class="a" style="left:636.83px;top:462px;width:1px;height:4px;background:#b4b4b4"></div>
<div class="a" style="left:642.50px;top:462px;width:1px;height:4px;background:#b4b4b4"></div>
<div class="a" style="left:648.17px;top:462px;width:1px;height:4px;background:#b4b4b4"></div>
<div class="a" style="left:653.83px;top:462px;width:1px;height:4px;background:#b4b4b4"></div>
<div class="a" style="left:659.50px;top:457px;width:1px;height:9px;background:#b4b4b4"></div>
<div class="a" style="left:665.17px;top:462px;width:1px;height:4px;background:#b4b4b4"></div>
<div class="a" style="left:670.83px;top:462px;width:1px;height:4px;background:#b4b4b4"></div>
<div class="a" style="left:676.50px;top:462px;width:1px;height:4px;background:#b4b4b4"></div>
<div class="a" style="left:682.17px;top:462px;width:1px;height:4px;background:#b4b4b4"></div>
<div class="a" style="left:687.83px;top:462px;width:1px;height:4px;background:#b4b4b4"></div>
<div class="a" style="left:693.50px;top:462px;width:1px;height:4px;background:#b4b4b4"></div>
<div class="a" style="left:699.17px;top:462px;width:1px;height:4px;background:#b4b4b4"></div>
<div class="a" style="left:704.83px;top:462px;width:1px;height:4px;background:#b4b4b4"></div>
<div class="a" style="left:710.50px;top:462px;width:1px;height:4px;background:#b4b4b4"></div>
<div class="a" style="left:716.17px;top:462px;width:1px;height:4px;background:#b4b4b4"></div>
<div class="a" style="left:721.83px;top:462px;width:1px;height:4px;background:#b4b4b4"></div>
<div class="a" style="left:727.50px;top:462px;width:1px;height:4px;background:#b4b4b4"></div>
<div class="a" style="left:733.17px;top:462px;width:1px;height:4px;background:#b4b4b4"></div>
<div class="a" style="left:738.83px;top:462px;width:1px;height:4px;background:#b4b4b4"></div>
<div class="a" style="left:744.50px;top:457px;width:1px;height:9px;background:#b4b4b4"></div>
<div class="a" style="left:750.17px;top:462px;width:1px;height:4px;background:#b4b4b4"></div>
<div class="a" style="left:755.83px;top:462px;width:1px;height:4px;background:#b4b4b4"></div>
<div class="a" style="left:761.50px;top:462px;width:1px;height:4px;background:#b4b4b4"></div>
<div class="a" style="left:767.17px;top:462px;width:1px;height:4px;background:#b4b4b4"></div>
<div class="a" style="left:772.83px;top:462px;width:1px;height:4px;background:#b4b4b4"></div>
<div class="a" style="left:778.50px;top:462px;width:1px;height:4px;background:#b4b4b4"></div>
<div class="a" style="left:784.17px;top:462px;width:1px;height:4px;background:#b4b4b4"></div>
<div class="a" style="left:789.83px;top:462px;width:1px;height:4px;background:#b4b4b4"></div>
<div class="a" style="left:795.50px;top:462px;width:1px;height:4px;background:#b4b4b4"></div>
<div class="a" style="left:801.17px;top:462px;width:1px;height:4px;background:#b4b4b4"></div>
<div class="a" style="left:806.83px;top:462px;width:1px;height:4px;background:#b4b4b4"></div>
<div class="a" style="left:812.50px;top:462px;width:1px;height:4px;background:#b4b4b4"></div>
<div class="a" style="left:818.17px;top:462px;width:1px;height:4px;background:#b4b4b4"></div>
<div class="a" style="left:823.83px;top:462px;width:1px;height:4px;background:#b4b4b4"></div>
<div class="a" style="left:829.50px;top:457px;width:1px;height:9px;background:#b4b4b4"></div>
<div class="a" style="left:835.17px;top:462px;width:1px;height:4px;background:#b4b4b4"></div>
<div class="a" style="left:840.83px;top:462px;width:1px;height:4px;background:#b4b4b4"></div>
<div class="a" style="left:846.50px;top:462px;width:1px;height:4px;background:#b4b4b4"></div>
<div class="a" style="left:852.17px;top:462px;width:1px;height:4px;background:#b4b4b4"></div>
<div class="a" style="left:857.83px;top:462px;width:1px;height:4px;background:#b4b4b4"></div>
<div class="a" style="left:863.50px;top:462px;width:1px;height:4px;background:#b4b4b4"></div>
<div class="a" style="left:869.17px;top:462px;width:1px;height:4px;background:#b4b4b4"></div>
<div class="a" style="left:874.83px;top:462px;width:1px;height:4px;background:#b4b4b4"></div>
<div class="a" style="left:880.50px;top:462px;width:1px;height:4px;background:#b4b4b4"></div>
<div class="a" style="left:886.17px;top:462px;width:1px;height:4px;background:#b4b4b4"></div>
<div class="a" style="left:891.83px;top:462px;width:1px;height:4px;background:#b4b4b4"></div>
<div class="a" style="left:897.50px;top:462px;width:1px;height:4px;background:#b4b4b4"></div>
<div class="a" style="left:903.17px;top:462px;width:1px;height:4px;background:#b4b4b4"></div>
<div class="a" style="left:908.83px;top:462px;width:1px;height:4px;background:#b4b4b4"></div>
<div class="a" style="left:914.50px;top:457px;width:1px;height:9px;background:#b4b4b4"></div>
<div class="a" style="left:920.17px;top:462px;width:1px;height:4px;background:#b4b4b4"></div>
<div class="a" style="left:925.83px;top:462px;width:1px;height:4px;background:#b4b4b4"></div>
<div class="a" style="left:931.50px;top:462px;width:1px;height:4px;background:#b4b4b4"></div>
<div class="a" style="left:937.17px;top:462px;width:1px;height:4px;background:#b4b4b4"></div>
<div class="a" style="left:942.83px;top:462px;width:1px;height:4px;background:#b4b4b4"></div>
<div class="a" style="left:948.50px;top:462px;width:1px;height:4px;background:#b4b4b4"></div>
<div class="a" style="left:954.17px;top:462px;width:1px;height:4px;background:#b4b4b4"></div>
<div class="a" style="left:959.83px;top:462px;width:1px;height:4px;background:#b4b4b4"></div>
<div class="a" style="left:965.50px;top:462px;width:1px;height:4px;background:#b4b4b4"></div>
<div class="a" style="left:971.17px;top:462px;width:1px;height:4px;background:#b4b4b4"></div>
<div class="a" style="left:976.83px;top:462px;width:1px;height:4px;background:#b4b4b4"></div>
<div class="a" style="left:982.50px;top:462px;width:1px;height:4px;background:#b4b4b4"></div>
<div class="a" style="left:988.17px;top:462px;width:1px;height:4px;background:#b4b4b4"></div>
<div class="a" style="left:993.83px;top:462px;width:1px;height:4px;background:#b4b4b4"></div>
<div class="a" style="left:999.50px;top:457px;width:1px;height:9px;background:#b4b4b4"></div>
<div class="a" style="left:1005.17px;top:462px;width:1px;height:4px;background:#b4b4b4"></div>
<div class="a" style="left:1010.83px;top:462px;width:1px;height:4px;background:#b4b4b4"></div>
<div class="a" style="left:1016.50px;top:462px;width:1px;height:4px;background:#b4b4b4"></div>
<div class="a" style="left:1022.17px;top:462px;width:1px;height:4px;background:#b4b4b4"></div>
<div class="a" style="left:1027.83px;top:462px;width:1px;height:4px;background:#b4b4b4"></div>
<div class="a" style="left:1033.50px;top:462px;width:1px;height:4px;background:#b4b4b4"></div>
<div class="a" style="left:1039.17px;top:462px;width:1px;height:4px;background:#b4b4b4"></div>
<div class="a" style="left:1044.83px;top:462px;width:1px;height:4px;background:#b4b4b4"></div>
<div class="a" style="left:1050.50px;top:462px;width:1px;height:4px;background:#b4b4b4"></div>
<div class="a" style="left:1056.17px;top:462px;width:1px;height:4px;background:#b4b4b4"></div>
<div class="a" style="left:1061.83px;top:462px;width:1px;height:4px;background:#b4b4b4"></div>
<div class="a" style="left:1067.50px;top:462px;width:1px;height:4px;background:#b4b4b4"></div>
<div class="a" style="left:1073.17px;top:462px;width:1px;height:4px;background:#b4b4b4"></div>
<div class="a" style="left:1078.83px;top:462px;width:1px;height:4px;background:#b4b4b4"></div>
<div class="a" style="left:1084.50px;top:457px;width:1px;height:9px;background:#b4b4b4"></div>
<div class="a" style="left:1090.17px;top:462px;width:1px;height:4px;background:#b4b4b4"></div>
<div class="a" style="left:1095.83px;top:462px;width:1px;height:4px;background:#b4b4b4"></div>
<div class="a" style="left:1101.50px;top:462px;width:1px;height:4px;background:#a0a0a0"></div>
<div class="a" style="left:1107.17px;top:462px;width:1px;height:4px;background:#a0a0a0"></div>
<div class="a" style="left:1112.83px;top:462px;width:1px;height:4px;background:#a0a0a0"></div>
<div class="a" style="left:1118.50px;top:462px;width:1px;height:4px;background:#a0a0a0"></div>
<div class="a" style="left:1124.17px;top:462px;width:1px;height:4px;background:#a0a0a0"></div>
<div class="a" style="left:1129.83px;top:462px;width:1px;height:4px;background:#a0a0a0"></div>
<div class="a" style="left:1135.50px;top:462px;width:1px;height:4px;background:#a0a0a0"></div>
<div class="a" style="left:1141.17px;top:462px;width:1px;height:4px;background:#a0a0a0"></div>
<div class="a" style="left:1146.83px;top:462px;width:1px;height:4px;background:#a0a0a0"></div>
<div class="a" style="left:1152.50px;top:462px;width:1px;height:4px;background:#a0a0a0"></div>
<div class="a" style="left:1158.17px;top:462px;width:1px;height:4px;background:#a0a0a0"></div>
<div class="a" style="left:1163.83px;top:462px;width:1px;height:4px;background:#a0a0a0"></div>
<div class="a" style="left:1169.50px;top:457px;width:1px;height:9px;background:#a0a0a0"></div>
<div class="a" style="left:1175.17px;top:462px;width:1px;height:4px;background:#a0a0a0"></div>
<div class="t fit" style="left: 552.5px; top: 449px; font-size: 8px; color: rgb(196, 196, 196); font-family: &quot;Liberation Sans&quot;, sans-serif; width: 42.2656px; transform: scaleX(1.041);">00:00:32:00</div>
<div class="t fit" style="left: 637.5px; top: 449px; font-size: 8px; color: rgb(196, 196, 196); font-family: &quot;Liberation Sans&quot;, sans-serif; width: 42.2656px; transform: scaleX(1.041);">00:01:04:04</div>
<div class="t fit" style="left: 722.5px; top: 449px; font-size: 8px; color: rgb(196, 196, 196); font-family: &quot;Liberation Sans&quot;, sans-serif; width: 42.2656px; transform: scaleX(1.041);">00:01:36:04</div>
<div class="t fit" style="left: 807.5px; top: 449px; font-size: 8px; color: rgb(196, 196, 196); font-family: &quot;Liberation Sans&quot;, sans-serif; width: 42.2656px; transform: scaleX(1.041);">00:02:08:08</div>
<div class="t fit" style="left: 892.5px; top: 449px; font-size: 8px; color: rgb(196, 196, 196); font-family: &quot;Liberation Sans&quot;, sans-serif; width: 42.2656px; transform: scaleX(1.041);">00:02:40:08</div>
<div class="t fit" style="left: 977.5px; top: 449px; font-size: 8px; color: rgb(196, 196, 196); font-family: &quot;Liberation Sans&quot;, sans-serif; width: 42.2656px; transform: scaleX(1.041);">00:03:12:12</div>
<div class="t fit" style="left: 1062.5px; top: 449px; font-size: 8px; color: rgb(196, 196, 196); font-family: &quot;Liberation Sans&quot;, sans-serif; width: 42.2656px; transform: scaleX(1.041);">00:03:44:12</div>
<div class="t fit" style="left: 1147.5px; top: 449px; font-size: 8px; color: rgb(196, 196, 196); font-family: &quot;Liberation Sans&quot;, sans-serif; width: 26.7031px; transform: scaleX(1.0486);">00:04:1</div>
<svg class="a" style="left:657px;top:437px" width="7" height="11"><path d="M0.5 1Q0.5 0 1.5 0H5.5Q6.5 0 6.5 1V7L3.5 10.5L0.5 7Z" fill="#8a9a3a" stroke="#5a6a20" stroke-width="0.6"></path></svg>
<div class="a" style="left:548px;top:466.3px;width:552px;height:1.7px;background:#e8dc00"></div>
<div class="a" style="left:548px;top:468px;width:552px;height:183px;background:#404040"></div>
<div class="a" style="left:548px;top:499px;width:552px;height:1px;background:#333"></div>
<div class="a" style="left:413px;top:500px;width:135px;height:1px;background:#2a2a2a"></div>
<div class="a" style="left:1100px;top:499px;width:75px;height:1px;background:#2c2c2c"></div>
<div class="a" style="left:413px;top:558px;width:772px;height:3px;background:#2c2c2c"></div>
<div class="a" style="left:413px;top:636px;width:135px;height:1px;background:#2a2a2a"></div>
<div class="a" style="left:548px;top:636px;width:552px;height:1px;background:#333"></div>
<div class="a" style="left:1100px;top:635px;width:75px;height:1px;background:#2c2c2c"></div>
<div class="a" style="left:1099px;top:438px;width:1.5px;height:213px;background:#3a8fe8"></div>
<svg class="a" style="left:1096px;top:459px" width="8" height="9"><path d="M0 0H8V6L4 9L0 6Z" fill="#3a93f0"></path></svg>
<div class="a" style="left:555.0px;top:500px;width:8.4px;height:58px;background:#00648c;border-radius:2px"></div>
<div class="a" style="left:565.6px;top:500px;width:9.8px;height:58px;background:#00648c;border-radius:2px"></div>
<div class="a" style="left:582.4px;top:500px;width:10.0px;height:58px;background:#00648c;border-radius:2px"></div>
<div class="a" style="left:597.0px;top:500px;width:11.4px;height:58px;background:#00648c;border-radius:2px"></div>
<div class="a" style="left:609.7px;top:500px;width:8.7px;height:58px;background:#00648c;border-radius:2px"></div>
<div class="a" style="left:626.5px;top:500px;width:8.6px;height:58px;background:#00648c;border-radius:2px"></div>
<div class="a" style="left:644.5px;top:500px;width:12.4px;height:58px;background:#00648c;border-radius:2px"></div>
<div class="a" style="left:659.0px;top:500px;width:11.8px;height:58px;background:#00648c;border-radius:2px"></div>
<div class="a" style="left:672.7px;top:500px;width:4.7px;height:58px;background:#00648c;border-radius:2px"></div>
<div class="a" style="left:679.0px;top:500px;width:4.4px;height:58px;background:#00648c;border-radius:2px"></div>
<div class="a" style="left:696.0px;top:500px;width:10.6px;height:58px;background:#00648c;border-radius:2px"></div>
<div class="a" style="left:707.7px;top:500px;width:2.4px;height:58px;background:#00648c;border-radius:2px"></div>
<div class="a" style="left:720.3px;top:500px;width:4.4px;height:58px;background:#00648c;border-radius:2px"></div>
<div class="a" style="left:730.0px;top:500px;width:9.4px;height:58px;background:#00648c;border-radius:2px"></div>
<div class="a" style="left:746.0px;top:500px;width:4.9px;height:58px;background:#00648c;border-radius:2px"></div>
<div class="a" style="left:752.0px;top:500px;width:5.4px;height:58px;background:#00648c;border-radius:2px"></div>
<div class="a" style="left:759.0px;top:500px;width:5.4px;height:58px;background:#00648c;border-radius:2px"></div>
<div class="a" style="left:765.6px;top:500px;width:1.8px;height:58px;background:#00648c;border-radius:2px"></div>
<div class="a" style="left:768.7px;top:500px;width:3.7px;height:58px;background:#00648c;border-radius:2px"></div>
<div class="a" style="left:775.7px;top:500px;width:10.5px;height:58px;background:#00648c;border-radius:2px"></div>
<div class="a" style="left:787.3px;top:500px;width:2.4px;height:58px;background:#00648c;border-radius:2px"></div>
<div class="a" style="left:790.8px;top:500px;width:3.0px;height:58px;background:#00648c;border-radius:2px"></div>
<div class="a" style="left:794.9px;top:500px;width:2.9px;height:58px;background:#00648c;border-radius:2px"></div>
<div class="a" style="left:799.0px;top:500px;width:7.4px;height:58px;background:#00648c;border-radius:2px"></div>
<div class="a" style="left:808.0px;top:500px;width:4.9px;height:58px;background:#00648c;border-radius:2px"></div>
<div class="a" style="left:827.0px;top:500px;width:8.4px;height:58px;background:#00648c;border-radius:2px"></div>
<div class="a" style="left:848.0px;top:500px;width:7.6px;height:58px;background:#00648c;border-radius:2px"></div>
<div class="a" style="left:857.0px;top:500px;width:10.2px;height:58px;background:#00648c;border-radius:2px"></div>
<div class="a" style="left:868.8px;top:500px;width:10.0px;height:58px;background:#00648c;border-radius:2px"></div>
<div class="a" style="left:880.4px;top:500px;width:8.0px;height:58px;background:#00648c;border-radius:2px"></div>
<div class="a" style="left:890.0px;top:500px;width:10.4px;height:58px;background:#00648c;border-radius:2px"></div>
<div class="a" style="left:914.0px;top:500px;width:6.4px;height:58px;background:#00648c;border-radius:2px"></div>
<div class="a" style="left:922.0px;top:500px;width:6.1px;height:58px;background:#00648c;border-radius:2px"></div>
<div class="a" style="left:929.7px;top:500px;width:3.5px;height:58px;background:#00648c;border-radius:2px"></div>
<div class="a" style="left:934.8px;top:500px;width:4.4px;height:58px;background:#00648c;border-radius:2px"></div>
<div class="a" style="left:940.8px;top:500px;width:8.0px;height:58px;background:#4d5600;border-radius:2px"></div>
<div class="a" style="left:950.4px;top:500px;width:16.0px;height:58px;background:#00648c;border-radius:2px"></div>
<div class="a" style="left:968.0px;top:500px;width:11.4px;height:58px;background:#00648c;border-radius:2px"></div>
<div class="a" style="left:990.6px;top:500px;width:14.7px;height:58px;background:#00648c;border-radius:2px"></div>
<div class="a" style="left:1011.8px;top:500px;width:8.2px;height:58px;background:#00648c;border-radius:2px"></div>
<div class="a" style="left:1021.8px;top:500px;width:11.1px;height:58px;background:#00648c;border-radius:2px"></div>
<div class="a" style="left:1057.0px;top:500px;width:12.4px;height:58px;background:#00648c;border-radius:2px"></div>
<div class="a" style="left:1081.0px;top:500px;width:10.8px;height:58px;background:#00648c;border-radius:2px"></div>
<div class="a" style="left:808px;top:510px;width:5.5px;height:48px;background:#e07c72"></div>
<div class="a" style="left:950.4px;top:510px;width:16.6px;height:48px;background:repeating-linear-gradient(135deg,#0a0a0a 0 2px,#202020 2px 3px)"></div>
<div class="a" style="left:555px;top:500px;width:2.5px;height:2.5px;background:#e8e8e8"></div>
<div class="a" style="left:644.5px;top:500px;width:2.5px;height:2.5px;background:#e8e8e8"></div>
<div class="a" style="left:868.8px;top:500px;width:2.5px;height:2.5px;background:#e8e8e8"></div>
<div class="a" style="left:877px;top:500px;width:2.5px;height:2.5px;background:#e8e8e8"></div>
<div class="a" style="left:940.8px;top:500px;width:2.5px;height:2.5px;background:#e8e8e8"></div>
<div class="a" style="left:947px;top:500px;width:2.5px;height:2.5px;background:#e8e8e8"></div>
<div class="a" style="left:724.8px;top:468px;width:10.2px;height:31px;background:#00648c;border-radius:0 0 2px 2px"></div>
<div class="a" style="left:783.8px;top:468px;width:6.0px;height:31px;background:#b032c0;border-radius:0 0 2px 2px"></div>
<div class="a" style="left:1025.9px;top:468px;width:4.1px;height:31px;background:#e07c72;border-radius:0 0 2px 2px"></div>
<div class="a" style="left:1030.6px;top:468px;width:4.1px;height:31px;background:#e07c72;border-radius:0 0 2px 2px"></div>
<div class="a" style="left:548px;top:561px;width:78.0px;height:75px;background:#3b4200;border:1px solid #3e4224;border-radius:1.5px"></div>
<div class="a" style="left:627px;top:561px;width:8.3px;height:75px;background:#3b4200;border:1px solid #3e4224;border-radius:1.5px"></div>
<div class="a" style="left:637px;top:561px;width:6.7px;height:75px;background:#3b4200;border:1px solid #3e4224;border-radius:1.5px"></div>
<div class="a" style="left:645px;top:561px;width:11.7px;height:75px;background:#3b4200;border:1px solid #3e4224;border-radius:1.5px"></div>
<div class="a" style="left:658px;top:561px;width:6.7px;height:75px;background:#3b4200;border:1px solid #3e4224;border-radius:1.5px"></div>
<div class="a" style="left:665.5px;top:561px;width:6.3px;height:75px;background:#3b4200;border:1px solid #3e4224;border-radius:1.5px"></div>
<div class="a" style="left:672.7px;top:561px;width:5.3px;height:75px;background:#3b4200;border:1px solid #3e4224;border-radius:1.5px"></div>
<div class="a" style="left:680px;top:561px;width:4.0px;height:75px;background:#3b4200;border:1px solid #3e4224;border-radius:1.5px"></div>
<div class="a" style="left:685px;top:561px;width:22.0px;height:75px;background:#3b4200;border:1px solid #3e4224;border-radius:1.5px"></div>
<div class="a" style="left:708px;top:561px;width:12.0px;height:75px;background:#3b4200;border:1px solid #3e4224;border-radius:1.5px"></div>
<div class="a" style="left:721px;top:561px;width:30.0px;height:75px;background:#3b4200;border:1px solid #3e4224;border-radius:1.5px"></div>
<div class="a" style="left:752px;top:561px;width:34.0px;height:75px;background:#3b4200;border:1px solid #3e4224;border-radius:1.5px"></div>
<div class="a" style="left:787px;top:561px;width:39.6px;height:75px;background:#3b4200;border:1px solid #3e4224;border-radius:1.5px"></div>
<div class="a" style="left:827.6px;top:561px;width:41.7px;height:75px;background:#3b4200;border:1px solid #3e4224;border-radius:1.5px"></div>
<div class="a" style="left:870.8px;top:561px;width:41.8px;height:75px;background:#3b4200;border:1px solid #3e4224;border-radius:1.5px"></div>
<div class="a" style="left:913.6px;top:561px;width:7.6px;height:75px;background:#3b4200;border:1px solid #3e4224;border-radius:1.5px"></div>
<div class="a" style="left:922px;top:561px;width:11.8px;height:75px;background:#3b4200;border:1px solid #3e4224;border-radius:1.5px"></div>
<div class="a" style="left:934.8px;top:561px;width:5.2px;height:75px;background:#3b4200;border:1px solid #3e4224;border-radius:1.5px"></div>
<div class="a" style="left:941px;top:561px;width:4.0px;height:75px;background:#3b4200;border:1px solid #3e4224;border-radius:1.5px"></div>
<div class="a" style="left:946px;top:561px;width:3.4px;height:75px;background:#3b4200;border:1px solid #3e4224;border-radius:1.5px"></div>
<div class="a" style="left:950.4px;top:561px;width:39.0px;height:75px;background:#3b4200;border:1px solid #3e4224;border-radius:1.5px"></div>
<div class="a" style="left:990.6px;top:561px;width:15.4px;height:75px;background:#3b4200;border:1px solid #3e4224;border-radius:1.5px"></div>
<div class="a" style="left:1007px;top:561px;width:26.0px;height:75px;background:#3b4200;border:1px solid #3e4224;border-radius:1.5px"></div>
<div class="a" style="left:1034px;top:561px;width:22.0px;height:75px;background:#3b4200;border:1px solid #3e4224;border-radius:1.5px"></div>
<div class="a" style="left:1057px;top:561px;width:6.0px;height:75px;background:#3b4200;border:1px solid #3e4224;border-radius:1.5px"></div>
<div class="a" style="left:1064px;top:561px;width:16.6px;height:75px;background:#3b4200;border:1px solid #3e4224;border-radius:1.5px"></div>
<div class="a" style="left:1081.8px;top:561px;width:5.2px;height:75px;background:#3b4200;border:1px solid #3e4224;border-radius:1.5px"></div>
<div class="a" style="left:1088px;top:561px;width:11.0px;height:75px;background:#3b4200;border:1px solid #3e4224;border-radius:1.5px"></div>
<div class="a" style="left:549px;top:592px;width:76.0px;height:2px;background:#a9ab86"></div>
<div class="a" style="left:628px;top:592px;width:6.3px;height:2px;background:#a9ab86"></div>
<div class="a" style="left:638px;top:592px;width:4.7px;height:2px;background:#a9ab86"></div>
<div class="a" style="left:646px;top:592px;width:9.7px;height:2px;background:#a9ab86"></div>
<div class="a" style="left:659px;top:592px;width:4.7px;height:2px;background:#a9ab86"></div>
<div class="a" style="left:666.5px;top:592px;width:4.3px;height:2px;background:#a9ab86"></div>
<div class="a" style="left:673.7px;top:592px;width:3.3px;height:2px;background:#a9ab86"></div>
<div class="a" style="left:681px;top:592px;width:2.0px;height:2px;background:#a9ab86"></div>
<div class="a" style="left:686px;top:592px;width:20.0px;height:2px;background:#a9ab86"></div>
<div class="a" style="left:709px;top:592px;width:10.0px;height:2px;background:#a9ab86"></div>
<div class="a" style="left:722px;top:592px;width:28.0px;height:2px;background:#a9ab86"></div>
<div class="a" style="left:753px;top:592px;width:32.0px;height:2px;background:#a9ab86"></div>
<div class="a" style="left:788px;top:592px;width:37.6px;height:2px;background:#a9ab86"></div>
<div class="a" style="left:828.6px;top:592px;width:39.7px;height:2px;background:#a9ab86"></div>
<div class="a" style="left:871.8px;top:592px;width:39.8px;height:2px;background:#a9ab86"></div>
<div class="a" style="left:914.6px;top:592px;width:5.6px;height:2px;background:#a9ab86"></div>
<div class="a" style="left:923px;top:592px;width:9.8px;height:2px;background:#a9ab86"></div>
<div class="a" style="left:935.8px;top:592px;width:3.2px;height:2px;background:#a9ab86"></div>
<div class="a" style="left:942px;top:592px;width:2.0px;height:2px;background:#a9ab86"></div>
<div class="a" style="left:947px;top:592px;width:1.4px;height:2px;background:#a9ab86"></div>
<div class="a" style="left:951.4px;top:592px;width:37.0px;height:2px;background:#a9ab86"></div>
<div class="a" style="left:991.6px;top:592px;width:13.4px;height:2px;background:#a9ab86"></div>
<div class="a" style="left:1008px;top:592px;width:24.0px;height:2px;background:#a9ab86"></div>
<div class="a" style="left:1035px;top:592px;width:20.0px;height:2px;background:#a9ab86"></div>
<div class="a" style="left:1058px;top:592px;width:4.0px;height:2px;background:#a9ab86"></div>
<div class="a" style="left:1065px;top:592px;width:14.6px;height:2px;background:#a9ab86"></div>
<div class="a" style="left:1082.8px;top:592px;width:3.2px;height:2px;background:#a9ab86"></div>
<div class="a" style="left:1089px;top:592px;width:9.0px;height:2px;background:#a9ab86"></div>
<div class="t" style="left:549.5px;top:594px;font-size:6px;line-height:7px;height:7px;color:#e4e8ee;background:#141600;padding:0 1.2px;font-family:'Liberation Serif',serif">L</div>
<div class="t" style="left:549.5px;top:625.5px;font-size:6px;line-height:7px;height:7px;color:#e4e8ee;background:#141600;padding:0 1.2px;font-family:'Liberation Serif',serif">R</div>
<div class="t" style="left:646.5px;top:594px;font-size:6px;line-height:7px;height:7px;color:#e4e8ee;background:#141600;padding:0 1.2px;font-family:'Liberation Serif',serif">L</div>
<div class="t" style="left:646.5px;top:625.5px;font-size:6px;line-height:7px;height:7px;color:#e4e8ee;background:#141600;padding:0 1.2px;font-family:'Liberation Serif',serif">R</div>
<div class="t" style="left:686.5px;top:594px;font-size:6px;line-height:7px;height:7px;color:#e4e8ee;background:#141600;padding:0 1.2px;font-family:'Liberation Serif',serif">L</div>
<div class="t" style="left:686.5px;top:625.5px;font-size:6px;line-height:7px;height:7px;color:#e4e8ee;background:#141600;padding:0 1.2px;font-family:'Liberation Serif',serif">R</div>
<div class="t" style="left:709.5px;top:594px;font-size:6px;line-height:7px;height:7px;color:#e4e8ee;background:#141600;padding:0 1.2px;font-family:'Liberation Serif',serif">L</div>
<div class="t" style="left:709.5px;top:625.5px;font-size:6px;line-height:7px;height:7px;color:#e4e8ee;background:#141600;padding:0 1.2px;font-family:'Liberation Serif',serif">R</div>
<div class="t" style="left:722.5px;top:594px;font-size:6px;line-height:7px;height:7px;color:#e4e8ee;background:#141600;padding:0 1.2px;font-family:'Liberation Serif',serif">L</div>
<div class="t" style="left:722.5px;top:625.5px;font-size:6px;line-height:7px;height:7px;color:#e4e8ee;background:#141600;padding:0 1.2px;font-family:'Liberation Serif',serif">R</div>
<div class="t" style="left:753.5px;top:594px;font-size:6px;line-height:7px;height:7px;color:#e4e8ee;background:#141600;padding:0 1.2px;font-family:'Liberation Serif',serif">L</div>
<div class="t" style="left:753.5px;top:625.5px;font-size:6px;line-height:7px;height:7px;color:#e4e8ee;background:#141600;padding:0 1.2px;font-family:'Liberation Serif',serif">R</div>
<div class="t" style="left:788.5px;top:594px;font-size:6px;line-height:7px;height:7px;color:#e4e8ee;background:#141600;padding:0 1.2px;font-family:'Liberation Serif',serif">L</div>
<div class="t" style="left:788.5px;top:625.5px;font-size:6px;line-height:7px;height:7px;color:#e4e8ee;background:#141600;padding:0 1.2px;font-family:'Liberation Serif',serif">R</div>
<div class="t" style="left:829.1px;top:594px;font-size:6px;line-height:7px;height:7px;color:#e4e8ee;background:#141600;padding:0 1.2px;font-family:'Liberation Serif',serif">L</div>
<div class="t" style="left:829.1px;top:625.5px;font-size:6px;line-height:7px;height:7px;color:#e4e8ee;background:#141600;padding:0 1.2px;font-family:'Liberation Serif',serif">R</div>
<div class="t" style="left:872.3px;top:594px;font-size:6px;line-height:7px;height:7px;color:#e4e8ee;background:#141600;padding:0 1.2px;font-family:'Liberation Serif',serif">L</div>
<div class="t" style="left:872.3px;top:625.5px;font-size:6px;line-height:7px;height:7px;color:#e4e8ee;background:#141600;padding:0 1.2px;font-family:'Liberation Serif',serif">R</div>
<div class="t" style="left:923.5px;top:594px;font-size:6px;line-height:7px;height:7px;color:#e4e8ee;background:#141600;padding:0 1.2px;font-family:'Liberation Serif',serif">L</div>
<div class="t" style="left:923.5px;top:625.5px;font-size:6px;line-height:7px;height:7px;color:#e4e8ee;background:#141600;padding:0 1.2px;font-family:'Liberation Serif',serif">R</div>
<div class="t" style="left:951.9px;top:594px;font-size:6px;line-height:7px;height:7px;color:#e4e8ee;background:#141600;padding:0 1.2px;font-family:'Liberation Serif',serif">L</div>
<div class="t" style="left:951.9px;top:625.5px;font-size:6px;line-height:7px;height:7px;color:#e4e8ee;background:#141600;padding:0 1.2px;font-family:'Liberation Serif',serif">R</div>
<div class="t" style="left:992.1px;top:594px;font-size:6px;line-height:7px;height:7px;color:#e4e8ee;background:#141600;padding:0 1.2px;font-family:'Liberation Serif',serif">L</div>
<div class="t" style="left:992.1px;top:625.5px;font-size:6px;line-height:7px;height:7px;color:#e4e8ee;background:#141600;padding:0 1.2px;font-family:'Liberation Serif',serif">R</div>
<div class="t" style="left:1008.5px;top:594px;font-size:6px;line-height:7px;height:7px;color:#e4e8ee;background:#141600;padding:0 1.2px;font-family:'Liberation Serif',serif">L</div>
<div class="t" style="left:1008.5px;top:625.5px;font-size:6px;line-height:7px;height:7px;color:#e4e8ee;background:#141600;padding:0 1.2px;font-family:'Liberation Serif',serif">R</div>
<div class="t" style="left:1035.5px;top:594px;font-size:6px;line-height:7px;height:7px;color:#e4e8ee;background:#141600;padding:0 1.2px;font-family:'Liberation Serif',serif">L</div>
<div class="t" style="left:1035.5px;top:625.5px;font-size:6px;line-height:7px;height:7px;color:#e4e8ee;background:#141600;padding:0 1.2px;font-family:'Liberation Serif',serif">R</div>
<div class="t" style="left:1065.5px;top:594px;font-size:6px;line-height:7px;height:7px;color:#e4e8ee;background:#141600;padding:0 1.2px;font-family:'Liberation Serif',serif">L</div>
<div class="t" style="left:1065.5px;top:625.5px;font-size:6px;line-height:7px;height:7px;color:#e4e8ee;background:#141600;padding:0 1.2px;font-family:'Liberation Serif',serif">R</div>
<div class="t" style="left:1089.5px;top:594px;font-size:6px;line-height:7px;height:7px;color:#e4e8ee;background:#141600;padding:0 1.2px;font-family:'Liberation Serif',serif">L</div>
<div class="t" style="left:1089.5px;top:625.5px;font-size:6px;line-height:7px;height:7px;color:#e4e8ee;background:#141600;padding:0 1.2px;font-family:'Liberation Serif',serif">R</div>
<div class="t" style="left:613.4px;top:563px;font-size:8px;color:#d0d0b0;font-style:italic;font-family:'Liberation Serif',serif">fx</div>
<div class="t" style="left:695px;top:563px;font-size:8px;color:#d0d0b0;font-style:italic;font-family:'Liberation Serif',serif">fx</div>
<div class="t" style="left:738.7px;top:563px;font-size:8px;color:#d0d0b0;font-style:italic;font-family:'Liberation Serif',serif">fx</div>
<div class="t" style="left:774px;top:563px;font-size:8px;color:#d0d0b0;font-style:italic;font-family:'Liberation Serif',serif">fx</div>
<div class="t" style="left:814px;top:563px;font-size:8px;color:#d0d0b0;font-style:italic;font-family:'Liberation Serif',serif">fx</div>
<div class="t" style="left:857px;top:563px;font-size:8px;color:#d0d0b0;font-style:italic;font-family:'Liberation Serif',serif">fx</div>
<div class="t" style="left:900.8px;top:563px;font-size:8px;color:#d0d0b0;font-style:italic;font-family:'Liberation Serif',serif">fx</div>
<div class="t" style="left:977px;top:563px;font-size:8px;color:#d0d0b0;font-style:italic;font-family:'Liberation Serif',serif">fx</div>
<div class="t" style="left:1020px;top:563px;font-size:8px;color:#d0d0b0;font-style:italic;font-family:'Liberation Serif',serif">fx</div>
<div class="t" style="left:1044px;top:563px;font-size:8px;color:#d0d0b0;font-style:italic;font-family:'Liberation Serif',serif">fx</div>
<svg class="a" style="left:598px;top:563.5px" width="9" height="8"><path d="M0 4L2.2 1.5L4.2 4L2.2 6.8ZM4.6 4L6.6 1L8.8 4L6.6 7.2Z" fill="#b4b894"></path><path d="M4.4 1V7" stroke="#3b4200" stroke-width="0.6"></path></svg>
<svg class="a" style="left:758px;top:563.5px" width="9" height="8"><path d="M0 4L2.2 1.5L4.2 4L2.2 6.8ZM4.6 4L6.6 1L8.8 4L6.6 7.2Z" fill="#b4b894"></path><path d="M4.4 1V7" stroke="#3b4200" stroke-width="0.6"></path></svg>
<svg class="a" style="left:799px;top:563.5px" width="9" height="8"><path d="M0 4L2.2 1.5L4.2 4L2.2 6.8ZM4.6 4L6.6 1L8.8 4L6.6 7.2Z" fill="#b4b894"></path><path d="M4.4 1V7" stroke="#3b4200" stroke-width="0.6"></path></svg>
<svg class="a" style="left:842px;top:563.5px" width="9" height="8"><path d="M0 4L2.2 1.5L4.2 4L2.2 6.8ZM4.6 4L6.6 1L8.8 4L6.6 7.2Z" fill="#b4b894"></path><path d="M4.4 1V7" stroke="#3b4200" stroke-width="0.6"></path></svg>
<svg class="a" style="left:885px;top:563.5px" width="9" height="8"><path d="M0 4L2.2 1.5L4.2 4L2.2 6.8ZM4.6 4L6.6 1L8.8 4L6.6 7.2Z" fill="#b4b894"></path><path d="M4.4 1V7" stroke="#3b4200" stroke-width="0.6"></path></svg>
<svg class="a" style="left:962px;top:563.5px" width="9" height="8"><path d="M0 4L2.2 1.5L4.2 4L2.2 6.8ZM4.6 4L6.6 1L8.8 4L6.6 7.2Z" fill="#b4b894"></path><path d="M4.4 1V7" stroke="#3b4200" stroke-width="0.6"></path></svg>
<div class="a" style="left:1175px;top:471px;width:8px;height:84px;background:#2c2c2c;border-radius:3px"></div>
<div class="a" style="left:1175px;top:563px;width:8px;height:85px;background:#2c2c2c;border-radius:3px"></div>
<div class="a" style="left:1175px;top:475px;width:8px;height:8px;border-radius:50%;border:1.2px solid #6a6a6a"></div>
<div class="a" style="left:1175px;top:534px;width:8px;height:8px;border-radius:50%;border:1.2px solid #6a6a6a"></div>
<div class="a" style="left:1175px;top:563px;width:8px;height:8px;border-radius:50%;border:1.2px solid #6a6a6a"></div>
<div class="a" style="left:1175px;top:630px;width:8px;height:8px;border-radius:50%;border:1.2px solid #6a6a6a"></div>
<div class="a" style="left:421px;top:651px;width:757px;height:9px;background:#2e2e2e"></div>
<div class="a" style="left:433px;top:651px;width:8px;height:8px;border-radius:50%;border:1.2px solid #6a6a6a"></div>
<div class="a" style="left:841px;top:651px;width:8px;height:8px;border-radius:50%;border:1.2px solid #6a6a6a"></div>
<div class="a" style="left:453px;top:467px;width:16px;height:32px;background:#0b5fd4;border-radius:0 0 3px 3px"></div>
<div class="t" style="left:456px;top:475px;font-size:8px;color:#e8e8e8;font-weight:bold;font-family:'Liberation Serif',serif">V3</div>
<div class="a" style="left:453px;top:500px;width:16px;height:58px;background:#0b5fd4;border-radius:3px 3px 0 0"></div>
<div class="a" style="left:421px;top:561px;width:16px;height:75px;background:#0b5fd4;border-radius:3px"></div>
<div class="t" style="left:424px;top:595px;font-size:8px;color:#e8e8e8;font-weight:bold;font-family:'Liberation Serif',serif">A1</div>
<div class="a" style="left:453px;top:637px;width:16px;height:14px;background:#0b5fd4;border-radius:3px 3px 0 0"></div>
<svg class="a" style="left:441px;top:474px" width="8" height="9"><path d="M1.5 4V2.5Q1.5 0.5 4 0.5Q6 0.5 6 2" fill="none" stroke="#777" stroke-width="1"></path><rect x="0.5" y="4" width="7" height="5" fill="#777"></rect><rect x="3.5" y="5.5" width="1" height="2" fill="#1e1e1e"></rect></svg>
<svg class="a" style="left:441px;top:595px" width="8" height="9"><path d="M1.5 4V2.5Q1.5 0.5 4 0.5Q6 0.5 6 2" fill="none" stroke="#777" stroke-width="1"></path><rect x="0.5" y="4" width="7" height="5" fill="#777"></rect><rect x="3.5" y="5.5" width="1" height="2" fill="#1e1e1e"></rect></svg>
<svg class="a" style="left:472px;top:466px" width="10" height="7"><rect x="0.5" y="0.5" width="6" height="6" fill="none" stroke="#8a8a8a"></rect><path d="M6.5 2L9.5 0.5V6.5L6.5 5" fill="#8a8a8a"></path></svg>
<svg class="a" style="left:487px;top:466px" width="11" height="7"><path d="M0.5 3.5Q5.5 -2 10.5 3.5Q5.5 9 0.5 3.5Z" fill="none" stroke="#9a9a9a"></path><circle cx="5.5" cy="3.5" r="1.6" fill="#9a9a9a"></circle></svg>
<div class="t" style="left:471px;top:482px;font-size:9px;color:#8a8a8a">视频 <span style="font-family:'Liberation Sans',sans-serif;font-size:8px">3</span></div>
<div class="t" style="left:457px;top:595px;font-size:8px;color:#b0b0b0;font-weight:bold;font-family:'Liberation Serif',serif">A1</div>
<div class="t" style="left:472px;top:594px;font-size:9px;color:#8a8a8a">音频 <span style="font-family:'Liberation Sans',sans-serif;font-size:8px;color:#8a7a50">1</span></div>
<svg class="a" style="left:473px;top:578px" width="9" height="7"><rect x="0.5" y="0.5" width="5" height="6" fill="none" stroke="#777"></rect><path d="M5.5 2L8.5 0.5V6.5L5.5 5" fill="#777"></path></svg>
<div class="t" style="left:488px;top:579px;font-size:7px;color:#6e6e6e;font-family:'Liberation Sans',sans-serif">M</div>
<div class="t" style="left:505px;top:579px;font-size:7px;color:#6e6e6e;font-family:'Liberation Sans',sans-serif">S</div>
<svg class="a" style="left:521px;top:577px" width="6" height="10"><rect x="1" y="0" width="4" height="6" rx="2" fill="#777"></rect><path d="M0.5 5Q0.5 7.5 3 7.5Q5.5 7.5 5.5 5M3 7.5V9.5M1 9.5H5" fill="none" stroke="#777" stroke-width="0.8"></path></svg>
<div class="t" style="left:473px;top:611px;font-size:8px;color:#777;font-family:'Liberation Sans',sans-serif">0.</div>
<svg class="a" style="left:491px;top:610px" width="5" height="8"><path d="M4.5 0V8L0 4Z" fill="#777"></path></svg>
<svg class="a" style="left:504px;top:610px" width="9" height="9"><path d="M4.5 0.8L8.2 4.5L4.5 8.2L0.8 4.5Z" fill="none" stroke="#777" stroke-width="1"></path></svg>
<svg class="a" style="left:522px;top:610px" width="5" height="8"><path d="M0.5 0V8L5 4Z" fill="#777"></path></svg>
<div class="pnl" style="left:1196px;top:413px;width:71px;height:254.6px"></div>
<div class="a" style="left:1204px;top:430px;width:38px;height:215px;background:#000"></div>
<div class="a" style="left:1204px;top:435px;width:38px;height:1.5px;background:#1a1a1a"></div>
<div class="a" style="left:1223px;top:430px;width:1px;height:5px;background:#1e1e1e"></div>
<div class="a" style="left:1204px;top:643px;width:18.5px;height:1.5px;background:#9a9a10"></div>
<div class="a" style="left:1224px;top:643px;width:18px;height:1.5px;background:#9a9a10"></div>
<div class="a" style="left:1243px;top:436.5px;width:2.5px;height:1px;background:#9a9a9a"></div>
<div class="a" style="left:1243px;top:439.9px;width:1px;height:1px;background:#666"></div>
<div class="a" style="left:1243px;top:443.4px;width:1px;height:1px;background:#666"></div>
<div class="a" style="left:1243px;top:446.8px;width:1px;height:1px;background:#666"></div>
<div class="a" style="left:1243px;top:450.2px;width:1px;height:1px;background:#666"></div>
<div class="a" style="left:1243px;top:453.7px;width:1px;height:1px;background:#666"></div>
<div class="a" style="left:1243px;top:457.1px;width:2.5px;height:1px;background:#9a9a9a"></div>
<div class="a" style="left:1243px;top:460.5px;width:1px;height:1px;background:#666"></div>
<div class="a" style="left:1243px;top:464.0px;width:1px;height:1px;background:#666"></div>
<div class="a" style="left:1243px;top:467.4px;width:1px;height:1px;background:#666"></div>
<div class="a" style="left:1243px;top:470.8px;width:1px;height:1px;background:#666"></div>
<div class="a" style="left:1243px;top:474.3px;width:1px;height:1px;background:#666"></div>
<div class="a" style="left:1243px;top:477.7px;width:2.5px;height:1px;background:#9a9a9a"></div>
<div class="a" style="left:1243px;top:481.1px;width:1px;height:1px;background:#666"></div>
<div class="a" style="left:1243px;top:484.6px;width:1px;height:1px;background:#666"></div>
<div class="a" style="left:1243px;top:488.0px;width:1px;height:1px;background:#666"></div>
<div class="a" style="left:1243px;top:491.4px;width:1px;height:1px;background:#666"></div>
<div class="a" style="left:1243px;top:494.9px;width:1px;height:1px;background:#666"></div>
<div class="a" style="left:1243px;top:498.3px;width:2.5px;height:1px;background:#9a9a9a"></div>
<div class="a" style="left:1243px;top:501.7px;width:1px;height:1px;background:#666"></div>
<div class="a" style="left:1243px;top:505.2px;width:1px;height:1px;background:#666"></div>
<div class="a" style="left:1243px;top:508.6px;width:1px;height:1px;background:#666"></div>
<div class="a" style="left:1243px;top:512.0px;width:1px;height:1px;background:#666"></div>
<div class="a" style="left:1243px;top:515.5px;width:1px;height:1px;background:#666"></div>
<div class="a" style="left:1243px;top:518.9px;width:2.5px;height:1px;background:#9a9a9a"></div>
<div class="a" style="left:1243px;top:522.3px;width:1px;height:1px;background:#666"></div>
<div class="a" style="left:1243px;top:525.8px;width:1px;height:1px;background:#666"></div>
<div class="a" style="left:1243px;top:529.2px;width:1px;height:1px;background:#666"></div>
<div class="a" style="left:1243px;top:532.6px;width:1px;height:1px;background:#666"></div>
<div class="a" style="left:1243px;top:536.1px;width:1px;height:1px;background:#666"></div>
<div class="a" style="left:1243px;top:539.5px;width:2.5px;height:1px;background:#9a9a9a"></div>
<div class="a" style="left:1243px;top:542.9px;width:1px;height:1px;background:#666"></div>
<div class="a" style="left:1243px;top:546.4px;width:1px;height:1px;background:#666"></div>
<div class="a" style="left:1243px;top:549.8px;width:1px;height:1px;background:#666"></div>
<div class="a" style="left:1243px;top:553.2px;width:1px;height:1px;background:#666"></div>
<div class="a" style="left:1243px;top:556.7px;width:1px;height:1px;background:#666"></div>
<div class="a" style="left:1243px;top:560.1px;width:2.5px;height:1px;background:#9a9a9a"></div>
<div class="a" style="left:1243px;top:563.5px;width:1px;height:1px;background:#666"></div>
<div class="a" style="left:1243px;top:567.0px;width:1px;height:1px;background:#666"></div>
<div class="a" style="left:1243px;top:570.4px;width:1px;height:1px;background:#666"></div>
<div class="a" style="left:1243px;top:573.8px;width:1px;height:1px;background:#666"></div>
<div class="a" style="left:1243px;top:577.3px;width:1px;height:1px;background:#666"></div>
<div class="a" style="left:1243px;top:580.7px;width:2.5px;height:1px;background:#9a9a9a"></div>
<div class="a" style="left:1243px;top:584.1px;width:1px;height:1px;background:#666"></div>
<div class="a" style="left:1243px;top:587.6px;width:1px;height:1px;background:#666"></div>
<div class="a" style="left:1243px;top:591.0px;width:1px;height:1px;background:#666"></div>
<div class="a" style="left:1243px;top:594.4px;width:1px;height:1px;background:#666"></div>
<div class="a" style="left:1243px;top:597.9px;width:1px;height:1px;background:#666"></div>
<div class="a" style="left:1243px;top:601.3px;width:2.5px;height:1px;background:#9a9a9a"></div>
<div class="a" style="left:1243px;top:604.7px;width:1px;height:1px;background:#666"></div>
<div class="a" style="left:1243px;top:608.2px;width:1px;height:1px;background:#666"></div>
<div class="a" style="left:1243px;top:611.6px;width:1px;height:1px;background:#666"></div>
<div class="a" style="left:1243px;top:615.0px;width:1px;height:1px;background:#666"></div>
<div class="a" style="left:1243px;top:618.5px;width:1px;height:1px;background:#666"></div>
<div class="a" style="left:1243px;top:621.9px;width:2.5px;height:1px;background:#9a9a9a"></div>
<div class="a" style="left:1243px;top:625.3px;width:1px;height:1px;background:#666"></div>
<div class="a" style="left:1243px;top:628.8px;width:1px;height:1px;background:#666"></div>
<div class="a" style="left:1243px;top:632.2px;width:1px;height:1px;background:#666"></div>
<div class="a" style="left:1243px;top:635.6px;width:1px;height:1px;background:#666"></div>
<div class="a" style="left:1243px;top:639.1px;width:1px;height:1px;background:#666"></div>
<div class="a" style="left:1243px;top:642.5px;width:2.5px;height:1px;background:#9a9a9a"></div>
<div class="t" style="left:1247.5px;top:434.0px;font-size:6.5px;color:#8a919a;font-family:'Liberation Sans',sans-serif">0</div>
<div class="t" style="left:1247.5px;top:454.6px;font-size:6.5px;color:#8a919a;font-family:'Liberation Sans',sans-serif">-6</div>
<div class="t" style="left:1247.5px;top:475.2px;font-size:6.5px;color:#8a919a;font-family:'Liberation Sans',sans-serif">-12</div>
<div class="t" style="left:1247.5px;top:495.8px;font-size:6.5px;color:#8a919a;font-family:'Liberation Sans',sans-serif">-18</div>
<div class="t" style="left:1247.5px;top:516.4px;font-size:6.5px;color:#8a919a;font-family:'Liberation Sans',sans-serif">-24</div>
<div class="t" style="left:1247.5px;top:537.0px;font-size:6.5px;color:#8a919a;font-family:'Liberation Sans',sans-serif">-30</div>
<div class="t" style="left:1247.5px;top:557.6px;font-size:6.5px;color:#8a919a;font-family:'Liberation Sans',sans-serif">-36</div>
<div class="t" style="left:1247.5px;top:578.2px;font-size:6.5px;color:#8a919a;font-family:'Liberation Sans',sans-serif">-42</div>
<div class="t" style="left:1247.5px;top:598.8px;font-size:6.5px;color:#8a919a;font-family:'Liberation Sans',sans-serif">-48</div>
<div class="t" style="left:1247.5px;top:619.4px;font-size:6.5px;color:#8a919a;font-family:'Liberation Sans',sans-serif">-54</div>
<div class="t" style="left:1247.5px;top:640.0px;font-size:6.5px;color:#8a919a;font-family:'Liberation Sans',sans-serif">dB</div>
<div class="t" style="left:1212px;top:650px;font-size:7px;color:#555;font-family:'Liberation Sans',sans-serif">S</div>
<div class="t" style="left:1231px;top:650px;font-size:7px;color:#555;font-family:'Liberation Sans',sans-serif">S</div><!-- ===== bottom strip & taskbar ===== -->
<div class="a" style="left:0;top:669px;width:1268px;height:13px;background:#1c1c1c"></div>
<div class="a" style="left:0;top:682px;width:1268px;height:32px;background:linear-gradient(90deg,#d9d9d9 0px,#d7dadd 250px,#d5dee6 450px,#dae3ea 700px,#e4e4de 820px,#ede3d4 900px,#ece1d6 1050px,#e5dfdc 1268px)"></div>
<svg class="a" style="left:12px;top:685px" width="20" height="22"><path d="M2 11.5Q5 13.5 8.5 12Q13 10 14 6.5Q17 8 16.5 12Q15.5 18 9 18.5Q4 18.5 2 11.5Z" fill="#f0951a"></path><circle cx="13.3" cy="6" r="5.3" fill="#d42a1e"></circle><text x="13.3" y="8.8" font-size="7.5" fill="#fff" text-anchor="middle" font-family="Liberation Sans" font-weight="bold">3</text></svg>
<div class="t" style="left:34px;top:689px;font-size:8px;color:#222">10°C</div>
<div class="t" style="left:33px;top:699px;font-size:8.5px;color:#333">晴朗</div>
<svg class="a" style="left:465px;top:691px" width="16" height="16"><defs><linearGradient id="wg" x1="0" y1="0" x2="1" y2="1"><stop offset="0" stop-color="#3ab4f8"></stop><stop offset="1" stop-color="#0a6fd6"></stop></linearGradient></defs><rect x="0" y="0" width="7.5" height="7.5" fill="url(#wg)"></rect><rect x="8.5" y="0" width="7.5" height="7.5" fill="url(#wg)"></rect><rect x="0" y="8.5" width="7.5" height="7.5" fill="url(#wg)"></rect><rect x="8.5" y="8.5" width="7.5" height="7.5" fill="url(#wg)"></rect></svg>
<div class="a" style="left:490px;top:687.5px;width:144px;height:21px;background:#f2f5f8;border:1px solid #d2d8de;border-radius:10.5px"></div>
<svg class="a" style="left:497px;top:694px" width="11" height="10"><circle cx="4.5" cy="4.5" r="3.5" fill="none" stroke="#1c2552" stroke-width="1.3"></circle><path d="M7 7L10 10" stroke="#1c2552" stroke-width="1.4"></path><path d="M8.5 0.5L9 1.8L10.3 2.2L9 2.6L8.5 4L8 2.6L6.7 2.2L8 1.8Z" fill="#1c2552"></path></svg>
<div class="t" style="left:514px;top:694px;font-size:9.5px;color:#333">搜索</div>
<div class="a" style="left:601px;top:690px;width:30px;height:15px;border-radius:8px;background:radial-gradient(ellipse at 50% 50%,#6a5a9a 0%,#9a8ab8 50%,#e8e0ee 100%)"></div>
<div class="a" style="left:604px;top:694px;width:4px;height:5px;background:#f0a060;border-radius:1px"></div>
<div class="a" style="left:624px;top:692px;width:4px;height:5px;background:#f0a060;border-radius:1px"></div>
<div class="a" style="left:614px;top:693px;width:3px;height:4px;background:#f7c080;border-radius:1px"></div>
<!-- task icons -->
<div class="a" style="left:642.5px;top:695px;width:12px;height:10px;background:#1a1a1a;border-radius:1px"></div>
<div class="a" style="left:647px;top:691px;width:11.5px;height:9.5px;background:#f4f4f4;border:1px solid #d0d0d0;border-radius:1px"></div>
<div class="a" style="left:647px;top:695px;width:7.5px;height:5.5px;background:#9a9a9a"></div>
<svg class="a" style="left:671px;top:690px" width="18" height="15"><path d="M0 1.5Q0 0 1.5 0H6.5L8 1.5H16.5Q18 1.5 18 3V13.5Q18 15 16.5 15H1.5Q0 15 0 13.5Z" fill="#f3bf3f"></path><path d="M0 5H18V13.5Q18 15 16.5 15H1.5Q0 15 0 13.5Z" fill="#fcd462"></path><rect x="5" y="10" width="8" height="4" rx="1" fill="#1b78d0"></rect></svg>
<div class="a" style="left:678px;top:709px;width:5px;height:1.5px;background:#777;border-radius:1px"></div>
<svg class="a" style="left:700px;top:690px" width="17" height="16"><defs><linearGradient id="eg" x1="0" y1="1" x2="1" y2="0"><stop offset="0" stop-color="#0c59c4"></stop><stop offset="0.55" stop-color="#2196e8"></stop><stop offset="1" stop-color="#5fdc6a"></stop></linearGradient></defs><circle cx="8.5" cy="8" r="7.8" fill="url(#eg)"></circle><path d="M4.2 9.6Q4.5 5 8.8 5Q12.6 5.2 12.8 8.6Q12.8 10.2 11 10.2H7Q7.6 12.6 10.6 12.6Q12.6 12.6 14.6 11.4Q12.6 15.6 8.4 15.6Q4.4 15.2 4.2 9.6Z" fill="#0a3f8a"></path><path d="M7 8.4Q7.2 6.6 9 6.6Q10.6 6.7 10.6 8.4Z" fill="#3ab8e8"></path></svg>
<svg class="a" style="left:729px;top:690px" width="18" height="15"><path d="M6 4V2.5Q6 0.5 9 0.5Q12 0.5 12 2.5V4" fill="none" stroke="#1d6ec8" stroke-width="1.3"></path><rect x="0.5" y="3.5" width="17" height="11" rx="2" fill="#1c67c0"></rect><rect x="6" y="6" width="2.8" height="2.8" fill="#f25022"></rect><rect x="9.2" y="6" width="2.8" height="2.8" fill="#7fba00"></rect><rect x="6" y="9.2" width="2.8" height="2.8" fill="#00a4ef"></rect><rect x="9.2" y="9.2" width="2.8" height="2.8" fill="#ffb900"></rect></svg>
<div class="a" style="left:758px;top:690px;width:17px;height:15px;background:#00005b;border-radius:3px;border:1px solid #3434a0"></div>
<div class="t" style="left:761px;top:693px;font-size:9px;color:#a8a6ff;font-weight:bold">Pr</div>
<div class="a" style="left:759px;top:709px;width:16px;height:2px;background:#1c72d0;border-radius:1px"></div>
<div class="a" style="left:783px;top:686px;width:25px;height:25px;background:#eef1f3;border-radius:4px;border:1px solid #e2e5e8"></div>
<svg class="a" style="left:787px;top:689px" width="18" height="17"><path d="M1 9Q1 1.5 9 1.5Q17 1.5 17 9V15.5Q17 16.5 16 16.5H2Q1 16.5 1 15.5Z" fill="#6d747c"></path><circle cx="9" cy="9.2" r="6" fill="#f2f2f2"></circle><path d="M9 9.5L5.8 6.2M9 9.5L12.4 5.8" stroke="#1a1a1a" stroke-width="1.5"></path><path d="M9 9.5V14.5" stroke="#e0401c" stroke-width="1.4"></path><circle cx="15.6" cy="2" r="1.6" fill="#555b62"></circle></svg>
<div class="a" style="left:791px;top:709px;width:10px;height:2px;background:#1c72d0;border-radius:1px"></div>
<!-- tray -->
<svg class="a" style="left:1099px;top:695px" width="8" height="5"><path d="M0.5 4.5L4 1L7.5 4.5" fill="none" stroke="#222" stroke-width="1.2"></path></svg>
<svg class="a" style="left:1118px;top:692px" width="12" height="13"><path d="M1.5 6Q1.5 1.5 6 1.5Q8.5 1.5 10 3.5M10.5 1V4H7.5M10.5 7Q10.5 11.5 6 11.5Q3.5 11.5 2 9.5M1.5 12V9H4.5" fill="none" stroke="#333" stroke-width="1.1"></path><circle cx="9" cy="9.5" r="2.8" fill="#1a7ae0"></circle></svg>
<svg class="a" style="left:1140px;top:693px" width="12" height="11"><path d="M2.5 8Q0 8 0 5.5Q0 3 2.5 3Q3.5 0.5 6 0.5Q9 0.5 9.5 3.5Q11 4 11 6Q11 8 9 8Z" fill="#555"></path><circle cx="8" cy="7.5" r="3.2" fill="#1a7ae0"></circle><path d="M8 6.5V9M8 5.5V5.8" stroke="#fff" stroke-width="0.9"></path></svg>
<div class="t" style="left:1161px;top:693px;font-size:10.5px;color:#222">英</div>
<svg class="a" style="left:1182px;top:693px" width="12" height="10"><path d="M0.5 3.5Q6 -1.5 11.5 3.5M2.2 5.3Q6 2 9.8 5.3M3.9 7Q6 5.3 8.1 7" fill="none" stroke="#333" stroke-width="1"></path><circle cx="6" cy="8.6" r="1.1" fill="#333"></circle></svg>
<svg class="a" style="left:1198px;top:693px" width="12" height="10"><path d="M0.5 3.5H2.5L5.5 0.5V9.5L2.5 6.5H0.5Z" fill="none" stroke="#333" stroke-width="0.9"></path><path d="M7 3Q8 5 7 7M8.5 1.8Q10.3 5 8.5 8.2M10 0.8Q12.5 5 10 9.2" fill="none" stroke="#333" stroke-width="0.9"></path></svg>
<div class="t" style="left:1236px;top:688px;font-size:9px;color:#222">19:01</div>
<div class="t" style="left:1219px;top:699px;font-size:9px;color:#222">2025/11/5</div>

<!-- ===== clock window ===== -->
<div class="a" style="left:63px;top:178px;width:296px;height:335px;border-radius:8px;box-shadow:0 2px 6px rgba(0,0,0,.35)"></div>
<div class="a" style="left:65px;top:179px;width:292px;height:331px;background:linear-gradient(200deg,#fcf7f3 0%,#faf8f6 35%,#f8f8f8 65%,#f6f8fa 100%);border-radius:6px;overflow:hidden">
  <div class="a" style="left:11px;top:9px;width:10px;height:1.3px;background:#858585"></div>
  <div class="a" style="left:11px;top:12px;width:10px;height:1.3px;background:#858585"></div>
  <div class="a" style="left:11px;top:15px;width:10px;height:1.3px;background:#858585"></div>
  <svg class="a" style="left:37px;top:7px" width="11" height="11"><path d="M0.5 5.5Q0.5 0.5 5.5 0.5Q10.5 0.5 10.5 5.5V10.5H0.5Z" fill="#e8e8e8" stroke="#596470" stroke-width="1"></path><path d="M5.5 6L3.5 3.5M5.5 6L7.5 3.5" stroke="#333" stroke-width="1"></path><path d="M5.5 6V9.5" stroke="#e05a30" stroke-width="1.3"></path></svg>
  <div class="t" style="left:57px;top:8.5px;font-size:8.5px;color:#2a2a2a">时钟</div>
  <div class="a" style="left:212px;top:10px;width:7px;height:1px;background:#444"></div>
  <div class="a" style="left:242.5px;top:7px;width:7px;height:7px;border:1px solid #444;border-radius:1.5px"></div>
  <svg class="a" style="left:273px;top:7px" width="8" height="8"><path d="M0.5 0.5L7.5 7.5M7.5 0.5L0.5 7.5" stroke="#444" stroke-width="1"></path></svg>
  <svg class="a" style="left:236px;top:63px" width="10" height="10"><path d="M1 9L9 1M9 1H5M9 1V5M1 9H5M1 9V5" fill="none" stroke="#333" stroke-width="1"></path></svg>
  <svg class="a" style="left:263px;top:63px" width="11" height="10"><path d="M0.5 4V0.5H6" fill="none" stroke="#333" stroke-width="1" stroke-dasharray="2 1"></path><path d="M6 0.5H10.5V9.5H6V5H0.5" fill="none" stroke="#333" stroke-width="1"></path><path d="M1 9.5L4.5 6M1.5 6.5H4.5V9.5" fill="none" stroke="#333" stroke-width="1"></path></svg>
  <svg class="a" style="left:5px;top:76px" width="285" height="60"><g transform="translate(-70,-255)" fill="none" stroke="#1b1b1b" stroke-width="3.7">
<path d="M93.5,265.8C100.3,265.8 104.5,271 104.5,284.4C104.5,297.8 100.3,303 93.5,303C86.7,303 82.5,297.8 82.5,284.4C82.5,271 86.7,265.8 93.5,265.8Z"></path>
<path d="M123.7,265.8C130.7,265.8 134.9,271 134.9,284.4C134.9,297.8 130.7,303 123.7,303C116.7,303 112.5,297.8 112.5,284.4C112.5,271 116.7,265.8 123.7,265.8Z"></path>
<path d="M166.2,265.8C173.2,265.8 177.5,271 177.5,284.4C177.5,297.8 173.2,303 166.2,303C159.2,303 154.9,297.8 154.9,284.4C154.9,271 159.2,265.8 166.2,265.8Z"></path>
<path d="M186.6,268.3C188.8,266.6 191.8,265.7 195.3,265.7C201.4,265.7 204.4,269.3 204.4,274C204.4,279.5 200.3,282.9 194.4,282.9H189.6M194.4,282.9C201.8,282.9 205.9,286.8 205.9,292.8C205.9,299.3 201.1,303 194,303C190.3,303 187.6,302.2 185.8,300.9"></path>
<path d="M258.6,269C260.8,266.9 264.2,265.7 268.4,265.7C275,265.7 278.7,269.4 278.7,275C278.7,280.6 275.6,284.3 269.6,288.6C263.2,293.2 258.8,297 258.8,301.2V302.1H281.1"></path>
<path d="M321.4,275M329.1,276.5C333.5,276.5 335.6,279 335.6,282.3C335.6,285.8 333,288.5 329.1,288.5C325.2,288.5 322.6,285.8 322.6,282.3C322.6,279 324.7,276.5 329.1,276.5ZM329.1,288.5C334,288.5 336.8,291.5 336.8,295.6C336.8,300.1 333.6,302.8 329.1,302.8C324.6,302.8 321.4,300.1 321.4,295.6C321.4,291.5 324.2,288.5 329.1,288.5Z" stroke-width="3.3"></path>
</g><g transform="translate(-70,-255)" fill="#1b1b1b">
<path d="M243.6,263.7H240.1L229.9,270.6V274.9L239.6,268.7V304.2H243.6Z"></path>
<path d="M310.9,274.9H307.9L300.6,279.6V283.2L307.4,279.1V303.9H310.9Z"></path>
<circle cx="145.1" cy="273.6" r="3.1"></circle><circle cx="145.1" cy="297.1" r="3.1"></circle>
<circle cx="217.7" cy="273.3" r="3.1"></circle><circle cx="217.7" cy="297" r="3.1"></circle>
<circle cx="290.4" cy="301.3" r="3.2"></circle>
</g></svg>
<div class="t" style="left:32px;top:135px;font-size:11px;color:#333">小时</div>
  <div class="t" style="left:106px;top:135px;font-size:11px;color:#333">分钟</div>
  <div class="t" style="left:186px;top:135px;font-size:11px;color:#333">秒</div>
  <div class="a" style="left:81.5px;top:169px;width:34px;height:34px;border-radius:50%;background:#0a63c6"></div>
  <div class="a" style="left:93px;top:180px;width:4px;height:11px;background:#fff;border-radius:1px"></div>
  <div class="a" style="left:100px;top:180px;width:4px;height:11px;background:#fff;border-radius:1px"></div>
  <div class="a" style="left:129.5px;top:169.5px;width:33px;height:33px;border-radius:50%;background:#fff;border:1px solid #e6e3e0;box-shadow:0 1px 1px rgba(0,0,0,.06)"></div>
  <svg class="a" style="left:140px;top:180px" width="13" height="14"><path d="M1.6 0.8V13.5" stroke="#1a1a1a" stroke-width="1.3"></path><path d="M1.2 1H11.5L9 4.8L11.5 8.6H1.2Z" fill="#1a1a1a"></path></svg>
  <div class="a" style="left:176px;top:169.5px;width:33px;height:33px;border-radius:50%;background:#fff;border:1px solid #e6e3e0;box-shadow:0 1px 1px rgba(0,0,0,.06)"></div>
  <svg class="a" style="left:185px;top:179px" width="15" height="15"><path d="M3.8 4.2Q5.5 3.2 7.8 3.2Q12.8 3.2 12.8 8.2Q12.8 13.2 7.8 13.2Q2.8 13.2 2.8 8.6" fill="none" stroke="#222" stroke-width="1.2"></path><path d="M5.5 0.8L2.5 3.8L5.8 6" fill="none" stroke="#222" stroke-width="1.2"></path></svg>
</div>

<!-- ===== encode dialog ===== -->
<div class="a" style="left:513px;top:280px;width:241px;height:117px;background:#1e1e1e;border:1px solid #3e3e3e;border-radius:6px;overflow:hidden">
  <div class="a" style="left:0;top:0;width:241px;height:20px;background:#f0f0f0"></div>
  <div class="t fit" style="left: 6px; top: 6px; font-size: 9px; color: rgb(138, 138, 138); width: 47.0312px; transform: scaleX(0.8505);">编码 C2480</div>
  <svg class="a" style="left:226px;top:5px" width="8" height="8"><path d="M0.5 0.5L7.5 7.5M7.5 0.5L0.5 7.5" stroke="#777" stroke-width="1"></path></svg>
  <div class="t fit" style="left: 10.5px; top: 33px; font-size: 9px; color: rgb(189, 189, 189); width: 79.5312px; transform: scaleX(0.8927);">预计剩余时间：<span style="color:#9aa8c0">2</span> 秒</div>
  <div class="a" style="left:10px;top:49px;width:189px;height:4.5px;background:#3a3a3a;border-radius:3px"></div>
  <div class="a" style="left:10px;top:49px;width:187px;height:4.5px;background:#58a6f5;border-radius:3px"></div>
  <div class="t fit" style="left: 203.5px; top: 48px; font-size: 8px; color: rgb(196, 196, 196); width: 16.0156px; transform: scaleX(0.7493);">98%</div>
  <div class="a" style="left:194px;top:88px;width:35px;height:16px;border:1.2px solid #5c5c5c;border-radius:8px"></div>
  <div class="t" style="left:203.5px;top:91.5px;font-size:8.8px;color:#ececec">取消</div>
</div>


</body></html>
